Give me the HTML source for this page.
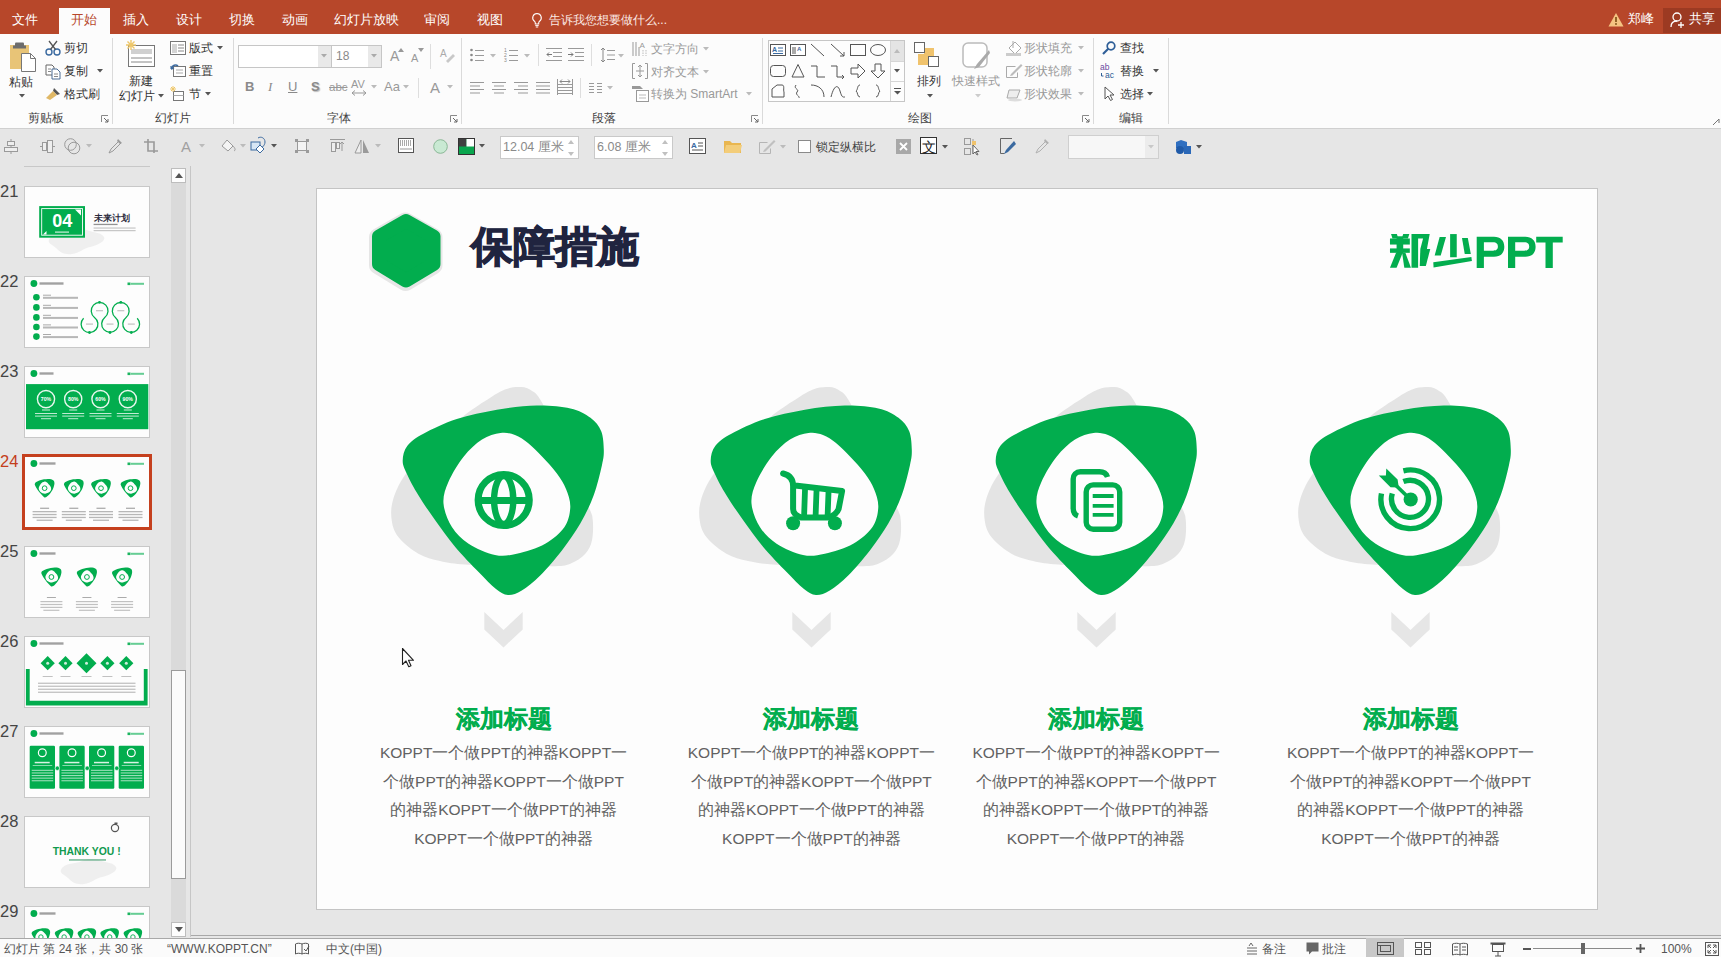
<!DOCTYPE html>
<html><head><meta charset="utf-8"><title>PowerPoint</title>
<style>
*{margin:0;padding:0;box-sizing:border-box}
html,body{width:1721px;height:957px;overflow:hidden}
body{position:relative;background:#e6e6e6;font-family:"Liberation Sans",sans-serif}
.a{position:absolute;white-space:nowrap}
svg.a{overflow:visible}
</style></head><body>
<div class="a" style="left:0px;top:0px;width:1721px;height:34px;background:#b7472a;"></div>
<div class="a" style="left:59px;top:8px;width:51px;height:27px;background:#fcfcfc;"></div>
<div class="a" style="left:-275px;width:600px;text-align:center;top:11.5px;font-size:12.5px;line-height:17px;color:#fff;font-weight:normal;">文件</div>
<div class="a" style="left:-216px;width:600px;text-align:center;top:11.5px;font-size:12.5px;line-height:17px;color:#b7472a;font-weight:normal;">开始</div>
<div class="a" style="left:-164px;width:600px;text-align:center;top:11.5px;font-size:12.5px;line-height:17px;color:#fff;font-weight:normal;">插入</div>
<div class="a" style="left:-111px;width:600px;text-align:center;top:11.5px;font-size:12.5px;line-height:17px;color:#fff;font-weight:normal;">设计</div>
<div class="a" style="left:-58px;width:600px;text-align:center;top:11.5px;font-size:12.5px;line-height:17px;color:#fff;font-weight:normal;">切换</div>
<div class="a" style="left:-5px;width:600px;text-align:center;top:11.5px;font-size:12.5px;line-height:17px;color:#fff;font-weight:normal;">动画</div>
<div class="a" style="left:66px;width:600px;text-align:center;top:11.5px;font-size:12.5px;line-height:17px;color:#fff;font-weight:normal;">幻灯片放映</div>
<div class="a" style="left:137px;width:600px;text-align:center;top:11.5px;font-size:12.5px;line-height:17px;color:#fff;font-weight:normal;">审阅</div>
<div class="a" style="left:190px;width:600px;text-align:center;top:11.5px;font-size:12.5px;line-height:17px;color:#fff;font-weight:normal;">视图</div>
<svg class="a" style="left:531px;top:12px;" width="12" height="16" viewBox="0 0 12 16"><path d="M6 1.5a4.3 4.3 0 0 0-2.6 7.7c.6.5.9 1.1.9 1.8v1h3.4v-1c0-.7.3-1.3.9-1.8A4.3 4.3 0 0 0 6 1.5z" fill="none" stroke="#fff" stroke-width="1.1"/><path d="M4.3 13.6h3.4M4.8 15h2.4" stroke="#fff" stroke-width="1"/></svg>
<div class="a" style="left:549px;top:12.0px;font-size:12px;line-height:16px;color:#fbe9e4;font-weight:normal;">告诉我您想要做什么...</div>
<svg class="a" style="left:1608px;top:12px;" width="16" height="15" viewBox="0 0 16 15"><path d="M8 1L15.5 14.5H.5z" fill="#f5c482"/><path d="M8 5v5" stroke="#7a4b10" stroke-width="1.6"/><circle cx="8" cy="12" r=".9" fill="#7a4b10"/></svg>
<div class="a" style="left:1628px;top:10.5px;font-size:12.5px;line-height:17px;color:#fff;font-weight:normal;">郑峰</div>
<div class="a" style="left:1663px;top:8px;width:58px;height:25px;background:#9c3a22;"></div>
<svg class="a" style="left:1670px;top:11px;" width="16" height="18" viewBox="0 0 16 18"><circle cx="7" cy="6" r="4" fill="none" stroke="#fff" stroke-width="1.3"/><path d="M1 16c0-4 2.5-6 6-6" fill="none" stroke="#fff" stroke-width="1.3"/><path d="M11 11v6M8 14h6" stroke="#fff" stroke-width="1.3"/></svg>
<div class="a" style="left:1689px;top:10.5px;font-size:12.5px;line-height:17px;color:#fff;font-weight:normal;">共享</div>
<div class="a" style="left:0px;top:34px;width:1721px;height:94px;background:#fcfcfc;"></div>
<div class="a" style="left:0px;top:128px;width:1721px;height:1px;background:#d0d0d0;"></div>
<div class="a" style="left:112px;top:38px;width:1px;height:86px;background:#dadada;"></div>
<div class="a" style="left:233px;top:38px;width:1px;height:86px;background:#dadada;"></div>
<div class="a" style="left:461px;top:38px;width:1px;height:86px;background:#dadada;"></div>
<div class="a" style="left:762px;top:38px;width:1px;height:86px;background:#dadada;"></div>
<div class="a" style="left:1093px;top:38px;width:1px;height:86px;background:#dadada;"></div>
<div class="a" style="left:1168px;top:38px;width:1px;height:86px;background:#dadada;"></div>
<div class="a" style="left:-254px;width:600px;text-align:center;top:110.0px;font-size:12px;line-height:16px;color:#444;font-weight:normal;">剪贴板</div>
<div class="a" style="left:-127px;width:600px;text-align:center;top:110.0px;font-size:12px;line-height:16px;color:#444;font-weight:normal;">幻灯片</div>
<div class="a" style="left:39px;width:600px;text-align:center;top:110.0px;font-size:12px;line-height:16px;color:#444;font-weight:normal;">字体</div>
<div class="a" style="left:304px;width:600px;text-align:center;top:110.0px;font-size:12px;line-height:16px;color:#444;font-weight:normal;">段落</div>
<div class="a" style="left:620px;width:600px;text-align:center;top:110.0px;font-size:12px;line-height:16px;color:#444;font-weight:normal;">绘图</div>
<div class="a" style="left:831px;width:600px;text-align:center;top:110.0px;font-size:12px;line-height:16px;color:#444;font-weight:normal;">编辑</div>
<svg class="a" style="left:101px;top:115px;" width="8" height="8" viewBox="0 0 8 8"><path d="M.5 7V.5H7" fill="none" stroke="#8a8a8a" stroke-width="1"/><path d="M3 3l4 4M4 7h3V4" fill="none" stroke="#666" stroke-width="1"/></svg>
<svg class="a" style="left:450px;top:115px;" width="8" height="8" viewBox="0 0 8 8"><path d="M.5 7V.5H7" fill="none" stroke="#8a8a8a" stroke-width="1"/><path d="M3 3l4 4M4 7h3V4" fill="none" stroke="#666" stroke-width="1"/></svg>
<svg class="a" style="left:751px;top:115px;" width="8" height="8" viewBox="0 0 8 8"><path d="M.5 7V.5H7" fill="none" stroke="#8a8a8a" stroke-width="1"/><path d="M3 3l4 4M4 7h3V4" fill="none" stroke="#666" stroke-width="1"/></svg>
<svg class="a" style="left:1082px;top:115px;" width="8" height="8" viewBox="0 0 8 8"><path d="M.5 7V.5H7" fill="none" stroke="#8a8a8a" stroke-width="1"/><path d="M3 3l4 4M4 7h3V4" fill="none" stroke="#666" stroke-width="1"/></svg>
<svg class="a" style="left:9px;top:41px;" width="29" height="31" viewBox="0 0 29 31"><rect x="1" y="4" width="19" height="24" fill="#e8c477"/><rect x="6" y="1.5" width="9" height="5" rx="1" fill="#6d6d6d"/><rect x="4" y="4.5" width="13" height="3" fill="#6d6d6d"/><path d="M12.5 12.5h9l5 5v13h-14z" fill="#fff" stroke="#777" stroke-width="1"/><path d="M21.5 12.5v5h5" fill="none" stroke="#777"/></svg>
<div class="a" style="left:-279px;width:600px;text-align:center;top:74.0px;font-size:12px;line-height:16px;color:#333;font-weight:normal;">粘贴</div>
<svg class="a" style="left:19px;top:94px;" width="6" height="4" viewBox="0 0 6 4"><path d="M0 0h6L3 3.5z" fill="#555"/></svg>
<svg class="a" style="left:45px;top:40px;" width="16" height="16" viewBox="0 0 16 16"><circle cx="4" cy="12" r="3" fill="none" stroke="#3b6aa0" stroke-width="1.4"/><circle cx="12" cy="12" r="3" fill="none" stroke="#3b6aa0" stroke-width="1.4"/><path d="M5.5 9.5L12 1M10.5 9.5L4 1" stroke="#555" stroke-width="1.3"/></svg>
<div class="a" style="left:64px;top:40.0px;font-size:12px;line-height:16px;color:#333;font-weight:normal;">剪切</div>
<svg class="a" style="left:45px;top:64px;" width="16" height="15" viewBox="0 0 16 15"><path d="M1 1h6l2 2v8H1z" fill="#fff" stroke="#666"/><path d="M7 5h5l3 3v7H7z" fill="#fff" stroke="#4d6d94"/><path d="M9 10h4M9 12.5h4M3 5h3M3 7.5h3" stroke="#888"/></svg>
<div class="a" style="left:64px;top:63.0px;font-size:12px;line-height:16px;color:#333;font-weight:normal;">复制</div>
<svg class="a" style="left:97px;top:69px;" width="6" height="4" viewBox="0 0 6 4"><path d="M0 0h6L3 3.5z" fill="#555"/></svg>
<svg class="a" style="left:45px;top:87px;" width="16" height="14" viewBox="0 0 16 14"><path d="M9 1l6 6-3 1-4-4z" fill="#555"/><path d="M1 11l7-7 4 4-7 5z" fill="#e0b866"/></svg>
<div class="a" style="left:64px;top:86.0px;font-size:12px;line-height:16px;color:#333;font-weight:normal;">格式刷</div>
<svg class="a" style="left:125px;top:40px;" width="32" height="29" viewBox="0 0 32 29"><rect x="3.5" y="5.5" width="26" height="21" fill="#fff" stroke="#777"/><rect x="6" y="9" width="21" height="5" fill="#d0d0d0"/><path d="M6 18h21M6 22h21" stroke="#888"/><g stroke="#eec76a" stroke-width="1.4"><path d="M6 0v10M1 5h10M2.5 1.5l7 7M9.5 1.5l-7 7"/></g></svg>
<div class="a" style="left:-159px;width:600px;text-align:center;top:73.0px;font-size:12px;line-height:16px;color:#333;font-weight:normal;">新建</div>
<div class="a" style="left:-163px;width:600px;text-align:center;top:88.0px;font-size:12px;line-height:16px;color:#333;font-weight:normal;">幻灯片</div>
<svg class="a" style="left:158px;top:94px;" width="6" height="4" viewBox="0 0 6 4"><path d="M0 0h6L3 3.5z" fill="#555"/></svg>
<svg class="a" style="left:170px;top:41px;" width="17" height="15" viewBox="0 0 17 15"><rect x=".5" y=".5" width="15" height="13" fill="#fff" stroke="#777"/><rect x="2" y="3" width="5" height="9" fill="#d4d4d4"/><path d="M8 4h6M8 7h6M8 10h6" stroke="#888"/></svg>
<div class="a" style="left:189px;top:40.0px;font-size:12px;line-height:16px;color:#333;font-weight:normal;">版式</div>
<svg class="a" style="left:217px;top:46px;" width="6" height="4" viewBox="0 0 6 4"><path d="M0 0h6L3 3.5z" fill="#555"/></svg>
<svg class="a" style="left:170px;top:63px;" width="17" height="15" viewBox="0 0 17 15"><rect x="3.5" y="3.5" width="12" height="10" fill="#fff" stroke="#777"/><path d="M6 7h7M6 10h7" stroke="#aaa"/><path d="M1 6c1-4 5-5 7-3" fill="none" stroke="#3b6aa0" stroke-width="1.5"/><path d="M0 3l1.5 4 3-2z" fill="#3b6aa0"/></svg>
<div class="a" style="left:189px;top:63.0px;font-size:12px;line-height:16px;color:#333;font-weight:normal;">重置</div>
<svg class="a" style="left:170px;top:86px;" width="15" height="15" viewBox="0 0 15 15"><rect x="3.5" y="5.5" width="10" height="9" fill="#fff" stroke="#777"/><path d="M3.5 9.5h10" stroke="#aaa"/><path d="M3 0v6M0 3h6M1 1l4 4M5 1L1 5" stroke="#eec76a"/></svg>
<div class="a" style="left:189px;top:86.0px;font-size:12px;line-height:16px;color:#333;font-weight:normal;">节</div>
<svg class="a" style="left:205px;top:92px;" width="6" height="4" viewBox="0 0 6 4"><path d="M0 0h6L3 3.5z" fill="#555"/></svg>
<div class="a" style="left:238px;top:45px;width:144px;height:23px;background:#fff;border:1px solid #c6c6c6"></div>
<div class="a" style="left:318px;top:46px;width:13px;height:21px;background:#e9e9e9;"></div>
<div class="a" style="left:331px;top:46px;width:1px;height:21px;background:#c6c6c6;"></div>
<div class="a" style="left:368px;top:46px;width:13px;height:21px;background:#e9e9e9;"></div>
<svg class="a" style="left:321px;top:54px;" width="6" height="4" viewBox="0 0 6 4"><path d="M0 0h6L3 3.5z" fill="#aaa"/></svg>
<svg class="a" style="left:371px;top:54px;" width="6" height="4" viewBox="0 0 6 4"><path d="M0 0h6L3 3.5z" fill="#aaa"/></svg>
<div class="a" style="left:336px;top:48.0px;font-size:12px;line-height:16px;color:#8a8a8a;font-weight:normal;">18</div>
<div class="a" style="left:395px;top:46.5px;font-size:14px;line-height:19px;color:#999;font-weight:normal;transform:translateX(-5px)">A</div>
<svg class="a" style="left:398px;top:48px;" width="6" height="4" viewBox="0 0 6 4"><path d="M0 4h6L3 0z" fill="#999"/></svg>
<div class="a" style="left:415px;top:50.5px;font-size:11px;line-height:15px;color:#999;font-weight:normal;transform:translateX(-4px)">A</div>
<svg class="a" style="left:418px;top:48px;" width="6" height="4" viewBox="0 0 6 4"><path d="M0 0h6L3 4z" fill="#999"/></svg>
<div class="a" style="left:430px;top:44px;width:1px;height:25px;background:#dedede;"></div>
<svg class="a" style="left:440px;top:48px;" width="15" height="15" viewBox="0 0 15 15"><text x="0" y="9" font-size="10" fill="#aaa" font-family="Liberation Sans">A</text><path d="M6 13l7-7 2 2-7 7z" fill="#c8c8c8"/></svg>
<div class="a" style="left:245px;top:78.0px;font-size:13px;line-height:18px;color:#8a8a8a;font-weight:normal;font-weight:bold">B</div>
<div class="a" style="left:268px;top:78.0px;font-size:13px;line-height:18px;color:#8a8a8a;font-weight:normal;font-style:italic;font-family:Liberation Serif">I</div>
<div class="a" style="left:288px;top:78.0px;font-size:13px;line-height:18px;color:#8a8a8a;font-weight:normal;text-decoration:underline">U</div>
<div class="a" style="left:311px;top:78.0px;font-size:13px;line-height:18px;color:#8a8a8a;font-weight:normal;font-weight:bold;text-shadow:1px 1px 1px #bbb">S</div>
<div class="a" style="left:329px;top:79.0px;font-size:11.5px;line-height:16px;color:#999;font-weight:normal;"><s>abc</s></div>
<div class="a" style="left:351px;top:76.5px;font-size:11px;line-height:15px;color:#999;font-weight:normal;">AV</div>
<svg class="a" style="left:351px;top:90px;" width="16" height="6" viewBox="0 0 16 6"><path d="M1 3h14M1 3l3-2.5M1 3l3 2.5M15 3l-3-2.5M15 3l-3 2.5" stroke="#999" fill="none"/></svg>
<svg class="a" style="left:371px;top:85px;" width="6" height="4" viewBox="0 0 6 4"><path d="M0 0h6L3 3.5z" fill="#bbb"/></svg>
<div class="a" style="left:384px;top:78.0px;font-size:13px;line-height:18px;color:#999;font-weight:normal;">Aa</div>
<svg class="a" style="left:403px;top:85px;" width="6" height="4" viewBox="0 0 6 4"><path d="M0 0h6L3 3.5z" fill="#bbb"/></svg>
<div class="a" style="left:418px;top:78px;width:1px;height:20px;background:#dedede;"></div>
<div class="a" style="left:430px;top:76.5px;font-size:15px;line-height:21px;color:#999;font-weight:normal;">A</div>
<svg class="a" style="left:447px;top:85px;" width="6" height="4" viewBox="0 0 6 4"><path d="M0 0h6L3 3.5z" fill="#bbb"/></svg>
<svg class="a" style="left:470px;top:48px;" width="15" height="14" viewBox="0 0 15 14"><g fill="#888"><circle cx="1.5" cy="2" r="1.3"/><circle cx="1.5" cy="7" r="1.3"/><circle cx="1.5" cy="12" r="1.3"/></g><path d="M5 2.5h9" stroke="#9a9a9a"/><path d="M5 7.5h9" stroke="#9a9a9a"/><path d="M5 12.5h9" stroke="#9a9a9a"/></svg>
<svg class="a" style="left:490px;top:54px;" width="6" height="4" viewBox="0 0 6 4"><path d="M0 0h6L3 3.5z" fill="#bbb"/></svg>
<svg class="a" style="left:504px;top:47px;" width="15" height="15" viewBox="0 0 15 15"><text x="0" y="5" font-size="5" fill="#888">1</text><text x="0" y="10" font-size="5" fill="#888">2</text><text x="0" y="15" font-size="5" fill="#888">3</text><path d="M5 3.5h9" stroke="#9a9a9a"/><path d="M5 8.5h9" stroke="#9a9a9a"/><path d="M5 13.5h9" stroke="#9a9a9a"/></svg>
<svg class="a" style="left:524px;top:54px;" width="6" height="4" viewBox="0 0 6 4"><path d="M0 0h6L3 3.5z" fill="#bbb"/></svg>
<div class="a" style="left:538px;top:44px;width:1px;height:22px;background:#dedede;"></div>
<svg class="a" style="left:546px;top:47px;" width="17" height="15" viewBox="0 0 17 15"><path d="M0 1.5h16" stroke="#9a9a9a"/><path d="M7 5.5h9" stroke="#9a9a9a"/><path d="M7 9.5h9" stroke="#9a9a9a"/><path d="M0 13.5h16" stroke="#9a9a9a"/><path d="M6 7.5H1M3 5.5L1 7.5l2 2" stroke="#777" fill="none"/></svg>
<svg class="a" style="left:568px;top:47px;" width="17" height="15" viewBox="0 0 17 15"><path d="M0 1.5h16" stroke="#9a9a9a"/><path d="M7 5.5h9" stroke="#9a9a9a"/><path d="M7 9.5h9" stroke="#9a9a9a"/><path d="M0 13.5h16" stroke="#9a9a9a"/><path d="M0 7.5h5M3 5.5l2 2-2 2" stroke="#777" fill="none"/></svg>
<div class="a" style="left:591px;top:44px;width:1px;height:22px;background:#dedede;"></div>
<svg class="a" style="left:600px;top:47px;" width="15" height="16" viewBox="0 0 15 16"><path d="M3 1v14M1 3l2-2 2 2M1 13l2 2 2-2" stroke="#888" fill="none"/><path d="M7 3.5h8" stroke="#9a9a9a"/><path d="M7 8.0h8" stroke="#9a9a9a"/><path d="M7 12.5h8" stroke="#9a9a9a"/></svg>
<svg class="a" style="left:618px;top:54px;" width="6" height="4" viewBox="0 0 6 4"><path d="M0 0h6L3 3.5z" fill="#bbb"/></svg>
<svg class="a" style="left:470px;top:81px;" width="14" height="13" viewBox="0 0 14 13"><path d="M0 1.5h14" stroke="#999"/><path d="M0 5.0h10" stroke="#999"/><path d="M0 8.5h14" stroke="#999"/><path d="M0 12.0h10" stroke="#999"/></svg>
<svg class="a" style="left:492px;top:81px;" width="14" height="13" viewBox="0 0 14 13"><path d="M0 1.5h14" stroke="#999"/><path d="M2 5.0h10" stroke="#999"/><path d="M0 8.5h14" stroke="#999"/><path d="M2 12.0h10" stroke="#999"/></svg>
<svg class="a" style="left:514px;top:81px;" width="14" height="13" viewBox="0 0 14 13"><path d="M0 1.5h14" stroke="#999"/><path d="M4 5.0h10" stroke="#999"/><path d="M0 8.5h14" stroke="#999"/><path d="M4 12.0h10" stroke="#999"/></svg>
<svg class="a" style="left:536px;top:81px;" width="14" height="13" viewBox="0 0 14 13"><path d="M0 1.5h14" stroke="#999"/><path d="M0 5.0h14" stroke="#999"/><path d="M0 8.5h14" stroke="#999"/><path d="M0 12.0h14" stroke="#999"/></svg>
<svg class="a" style="left:557px;top:79px;" width="16" height="16" viewBox="0 0 16 16"><path d="M.5 0v16M15.5 0v16" stroke="#999"/><path d="M1 5.5h14" stroke="#9a9a9a"/><path d="M1 8.5h14" stroke="#9a9a9a"/><path d="M1 11.5h14" stroke="#9a9a9a"/><path d="M1 14.5h14" stroke="#9a9a9a"/><path d="M3 2.5h10M3 2.5l2-2M3 2.5l2 2M13 2.5l-2-2M13 2.5l-2 2" stroke="#888" fill="none"/></svg>
<div class="a" style="left:580px;top:78px;width:1px;height:20px;background:#dedede;"></div>
<svg class="a" style="left:589px;top:82px;" width="14" height="12" viewBox="0 0 14 12"><path d="M0 1.5h5" stroke="#9a9a9a"/><path d="M0 4.5h5" stroke="#9a9a9a"/><path d="M0 7.5h5" stroke="#9a9a9a"/><path d="M0 10.5h5" stroke="#9a9a9a"/><path d="M8 1.5h5" stroke="#9a9a9a"/><path d="M8 4.5h5" stroke="#9a9a9a"/><path d="M8 7.5h5" stroke="#9a9a9a"/><path d="M8 10.5h5" stroke="#9a9a9a"/></svg>
<svg class="a" style="left:607px;top:86px;" width="6" height="4" viewBox="0 0 6 4"><path d="M0 0h6L3 3.5z" fill="#bbb"/></svg>
<svg class="a" style="left:632px;top:40px;" width="16" height="17" viewBox="0 0 16 17"><path d="M1 2v14M4 2v14M7 7v9" stroke="#999"/><text x="7.5" y="8" font-size="8" fill="#999">A</text><path d="M11 10v6M14 10v6" stroke="#bbb" stroke-dasharray="1.5 1"/></svg>
<div class="a" style="left:651px;top:41.0px;font-size:12px;line-height:16px;color:#999;font-weight:normal;">文字方向</div>
<svg class="a" style="left:703px;top:47px;" width="6" height="4" viewBox="0 0 6 4"><path d="M0 0h6L3 3.5z" fill="#bbb"/></svg>
<svg class="a" style="left:632px;top:63px;" width="16" height="16" viewBox="0 0 16 16"><path d="M3 .5H.5v15H3M13 .5h2.5v15H13" stroke="#999" fill="none"/><path d="M8 2v12M6 4l2-2 2 2M6 12l2 2 2-2M4 8h8" stroke="#999" fill="none"/></svg>
<div class="a" style="left:651px;top:64.0px;font-size:12px;line-height:16px;color:#999;font-weight:normal;">对齐文本</div>
<svg class="a" style="left:703px;top:70px;" width="6" height="4" viewBox="0 0 6 4"><path d="M0 0h6L3 3.5z" fill="#bbb"/></svg>
<svg class="a" style="left:632px;top:85px;" width="17" height="17" viewBox="0 0 17 17"><path d="M0 1h8l3 3H0z" fill="#999"/><rect x="4.5" y="5.5" width="12" height="11" fill="#fff" stroke="#999"/><path d="M7 10h7M7 13h7" stroke="#bbb"/></svg>
<div class="a" style="left:651px;top:86.0px;font-size:12px;line-height:16px;color:#999;font-weight:normal;">转换为 SmartArt</div>
<svg class="a" style="left:746px;top:92px;" width="6" height="4" viewBox="0 0 6 4"><path d="M0 0h6L3 3.5z" fill="#bbb"/></svg>
<div class="a" style="left:768px;top:40px;width:137px;height:62px;background:#fdfdfd;border:1px solid #c6c6c6"></div>
<div class="a" style="left:890px;top:41px;width:1px;height:60px;background:#d6d6d6;"></div>
<div class="a" style="left:891px;top:41px;width:13px;height:20px;background:#e4e4e4;"></div>
<div class="a" style="left:891px;top:61px;width:13px;height:1px;background:#d6d6d6;"></div>
<div class="a" style="left:891px;top:81px;width:13px;height:1px;background:#d6d6d6;"></div>
<svg class="a" style="left:894px;top:49px;" width="6" height="4" viewBox="0 0 6 4"><path d="M0 4h6L3 0z" fill="#bbb"/></svg>
<svg class="a" style="left:894px;top:69px;" width="6" height="4" viewBox="0 0 6 4"><path d="M0 0h6L3 3.5z" fill="#555"/></svg>
<svg class="a" style="left:894px;top:88px;" width="7" height="7" viewBox="0 0 7 7"><path d="M0 .5h7" stroke="#555"/><path d="M0 3h7L3.5 6.5z" fill="#555"/></svg>
<svg class="a" style="left:770px;top:42px;" width="16" height="16" viewBox="-8 -8 16 16"><rect x="-7.5" y="-5.5" width="15" height="11" fill="#fff" stroke="#555"/><text x="-6" y="2" font-size="7" fill="#3b6aa0" font-weight="bold">A</text><path d="M0 -2h5M0 1h5M-5 3.5h10" stroke="#3b6aa0"/></svg>
<svg class="a" style="left:790px;top:42px;" width="16" height="16" viewBox="-8 -8 16 16"><rect x="-7.5" y="-5.5" width="15" height="11" fill="#fff" stroke="#555"/><path d="M-5 -3v7M-3 -3v7" stroke="#555"/><text x="-1" y="1" font-size="6" fill="#3b6aa0" font-weight="bold">A</text></svg>
<svg class="a" style="left:810px;top:42px;" width="16" height="16" viewBox="-8 -8 16 16"><path d="M-7 -6L6 6" stroke="#555" fill="none" stroke-width="1"/></svg>
<svg class="a" style="left:830px;top:42px;" width="16" height="16" viewBox="-8 -8 16 16"><path d="M-7 -6L6 6M6 6V2M6 6H2" stroke="#555" fill="none" stroke-width="1"/></svg>
<svg class="a" style="left:850px;top:42px;" width="16" height="16" viewBox="-8 -8 16 16"><rect x="-7.5" y="-5.5" width="15" height="11" stroke="#555" fill="none" stroke-width="1"/></svg>
<svg class="a" style="left:870px;top:42px;" width="16" height="16" viewBox="-8 -8 16 16"><ellipse cx="0" cy="0" rx="7.5" ry="5.5" stroke="#555" fill="none" stroke-width="1"/></svg>
<svg class="a" style="left:770px;top:63px;" width="16" height="16" viewBox="-8 -8 16 16"><rect x="-7.5" y="-5.5" width="15" height="11" rx="3" stroke="#555" fill="none" stroke-width="1"/></svg>
<svg class="a" style="left:790px;top:63px;" width="16" height="16" viewBox="-8 -8 16 16"><path d="M0 -6.5L6 6H-6z" stroke="#555" fill="none" stroke-width="1"/></svg>
<svg class="a" style="left:810px;top:63px;" width="16" height="16" viewBox="-8 -8 16 16"><path d="M-7 -5H-1V6H7" stroke="#555" fill="none" stroke-width="1"/></svg>
<svg class="a" style="left:830px;top:63px;" width="16" height="16" viewBox="-8 -8 16 16"><path d="M-7 -5H-1V6H6M4 4l2 2-2 2" stroke="#555" fill="none" stroke-width="1"/></svg>
<svg class="a" style="left:850px;top:63px;" width="16" height="16" viewBox="-8 -8 16 16"><path d="M-7 -3H0V-7L7 0 0 7V3H-7z" stroke="#555" fill="none" stroke-width="1"/></svg>
<svg class="a" style="left:870px;top:63px;" width="16" height="16" viewBox="-8 -8 16 16"><path d="M-3 -7H3V0H7L0 7-7 0H-3z" stroke="#555" fill="none" stroke-width="1"/></svg>
<svg class="a" style="left:770px;top:83px;" width="16" height="16" viewBox="-8 -8 16 16"><path d="M-6 6V-2L-1 -6H4C7 -6 5 -1 6 1V6z" stroke="#555" fill="none" stroke-width="1"/></svg>
<svg class="a" style="left:790px;top:83px;" width="16" height="16" viewBox="-8 -8 16 16"><path d="M-2 -6C-5 -2 2 -2 -1 1-3 4 2 5 1 7" stroke="#555" fill="none" stroke-width="1"/></svg>
<svg class="a" style="left:810px;top:83px;" width="16" height="16" viewBox="-8 -8 16 16"><path d="M-7 -6C0 -6 6 -2 6 6" stroke="#555" fill="none" stroke-width="1"/></svg>
<svg class="a" style="left:830px;top:83px;" width="16" height="16" viewBox="-8 -8 16 16"><path d="M-7 6C-4 -6 0 -7 2 0S5 6 7 6" stroke="#555" fill="none" stroke-width="1"/></svg>
<svg class="a" style="left:850px;top:83px;" width="16" height="16" viewBox="-8 -8 16 16"><path d="M2 -6C-1 -6 0 -1-2 0 0 1-1 6 2 6" stroke="#555" fill="none" stroke-width="1"/></svg>
<svg class="a" style="left:870px;top:83px;" width="16" height="16" viewBox="-8 -8 16 16"><path d="M-2 -6C1 -6 0 -1 2 0 0 1 1 6-2 6" stroke="#555" fill="none" stroke-width="1"/></svg>
<svg class="a" style="left:914px;top:42px;" width="29" height="27" viewBox="0 0 29 27"><rect x="10" y="6" width="10" height="11" fill="#f0c36d"/><rect x="4" y="12" width="10" height="11" fill="#f0c36d"/><rect x=".5" y=".5" width="10" height="10" fill="#fff" stroke="#666"/><rect x="14.5" y="14.5" width="10" height="10" fill="#fff" stroke="#666"/></svg>
<div class="a" style="left:629px;width:600px;text-align:center;top:73.0px;font-size:12px;line-height:16px;color:#333;font-weight:normal;">排列</div>
<svg class="a" style="left:927px;top:94px;" width="6" height="4" viewBox="0 0 6 4"><path d="M0 0h6L3 3.5z" fill="#555"/></svg>
<svg class="a" style="left:962px;top:42px;" width="28" height="29" viewBox="0 0 28 29"><rect x="1" y="1" width="24" height="24" rx="5" fill="#fff" stroke="#bbb" stroke-width="1.5"/><path d="M27 8L15 22l-3 5 5-2 11-14z" fill="#aaa"/></svg>
<div class="a" style="left:676px;width:600px;text-align:center;top:73.0px;font-size:12px;line-height:16px;color:#999;font-weight:normal;">快速样式</div>
<svg class="a" style="left:975px;top:94px;" width="6" height="4" viewBox="0 0 6 4"><path d="M0 0h6L3 3.5z" fill="#ccc"/></svg>
<svg class="a" style="left:1006px;top:40px;" width="17" height="17" viewBox="0 0 17 17"><path d="M3 8l6-6 6 6-6 6z" fill="#fff" stroke="#aaa"/><path d="M7 1v7" stroke="#aaa"/><rect x="0" y="13" width="15" height="3" fill="#ccc"/></svg>
<div class="a" style="left:1024px;top:40.0px;font-size:12px;line-height:16px;color:#999;font-weight:normal;">形状填充</div>
<svg class="a" style="left:1078px;top:46px;" width="6" height="4" viewBox="0 0 6 4"><path d="M0 0h6L3 3.5z" fill="#bbb"/></svg>
<svg class="a" style="left:1006px;top:63px;" width="17" height="16" viewBox="0 0 17 16"><path d="M.5 3.5h9M.5 3.5v11h11v-5" stroke="#aaa" fill="none"/><path d="M5 11l10-10 1.5 1.5L6.5 12.5 4 13z" fill="#bbb"/></svg>
<div class="a" style="left:1024px;top:63.0px;font-size:12px;line-height:16px;color:#999;font-weight:normal;">形状轮廓</div>
<svg class="a" style="left:1078px;top:69px;" width="6" height="4" viewBox="0 0 6 4"><path d="M0 0h6L3 3.5z" fill="#bbb"/></svg>
<svg class="a" style="left:1006px;top:86px;" width="17" height="16" viewBox="0 0 17 16"><path d="M3 4h11l-3 8H1z" fill="#eee" stroke="#aaa"/><ellipse cx="9" cy="14" rx="7" ry="1.5" fill="#ddd"/></svg>
<div class="a" style="left:1024px;top:86.0px;font-size:12px;line-height:16px;color:#999;font-weight:normal;">形状效果</div>
<svg class="a" style="left:1078px;top:92px;" width="6" height="4" viewBox="0 0 6 4"><path d="M0 0h6L3 3.5z" fill="#bbb"/></svg>
<svg class="a" style="left:1102px;top:41px;" width="14" height="14" viewBox="0 0 14 14"><circle cx="9" cy="5" r="3.8" fill="none" stroke="#2f5f98" stroke-width="1.7"/><path d="M6.5 7.5L1 13" stroke="#2f5f98" stroke-width="2.2"/></svg>
<div class="a" style="left:1120px;top:40.0px;font-size:12px;line-height:16px;color:#333;font-weight:normal;">查找</div>
<svg class="a" style="left:1100px;top:63px;" width="18" height="16" viewBox="0 0 18 16"><text x="0" y="7" font-size="8.5" fill="#6b4aa0" font-family="Liberation Sans">ab</text><text x="5" y="15" font-size="8.5" fill="#2f5f98" font-family="Liberation Sans">ac</text><path d="M1.5 10v3h2" stroke="#2f5f98" fill="none"/></svg>
<div class="a" style="left:1120px;top:63.0px;font-size:12px;line-height:16px;color:#333;font-weight:normal;">替换</div>
<svg class="a" style="left:1153px;top:69px;" width="6" height="4" viewBox="0 0 6 4"><path d="M0 0h6L3 3.5z" fill="#555"/></svg>
<svg class="a" style="left:1104px;top:86px;" width="12" height="15" viewBox="0 0 12 15"><path d="M1 1v12l3-3 2.5 4.5 2-1L6 9h4z" fill="#fff" stroke="#555"/></svg>
<div class="a" style="left:1120px;top:86.0px;font-size:12px;line-height:16px;color:#333;font-weight:normal;">选择</div>
<svg class="a" style="left:1147px;top:92px;" width="6" height="4" viewBox="0 0 6 4"><path d="M0 0h6L3 3.5z" fill="#555"/></svg>
<svg class="a" style="left:1712px;top:118px;" width="8" height="8" viewBox="0 0 8 8"><path d="M1 7L7 1M7 1v4" stroke="#777" fill="none"/></svg>
<div class="a" style="left:0px;top:129px;width:1721px;height:38px;background:#e6e6e6;"></div>
<svg class="a" style="left:4px;top:139px;" width="14" height="15" viewBox="0 0 14 15"><path d="M7 0v15" stroke="#9a9a9a"/><rect x="3.5" y="2.5" width="7" height="4" fill="#eee" stroke="#9a9a9a"/><rect x=".5" y="8.5" width="13" height="4" fill="#eee" stroke="#9a9a9a"/></svg>
<svg class="a" style="left:40px;top:140px;" width="15" height="13" viewBox="0 0 15 13"><path d="M0 6.5h15" stroke="#9a9a9a"/><rect x="2.5" y="2.5" width="4" height="8" fill="#eee" stroke="#9a9a9a"/><rect x="7.5" y=".5" width="5" height="12" fill="#eee" stroke="#9a9a9a"/></svg>
<svg class="a" style="left:64px;top:138px;" width="17" height="17" viewBox="0 0 17 17"><circle cx="6.5" cy="6.5" r="5.8" fill="none" stroke="#9a9a9a"/><circle cx="10" cy="10" r="5.8" fill="none" stroke="#9a9a9a"/></svg>
<svg class="a" style="left:86px;top:144px;" width="6" height="4" viewBox="0 0 6 4"><path d="M0 0h6L3 3.5z" fill="#bbb"/></svg>
<svg class="a" style="left:108px;top:138px;" width="15" height="16" viewBox="0 0 15 16"><path d="M1 15l2-4 8-8 2 2-8 8z" fill="none" stroke="#9a9a9a"/><path d="M10 1l4 4-2 1-3-3z" fill="#9a9a9a"/></svg>
<svg class="a" style="left:144px;top:139px;" width="14" height="14" viewBox="0 0 14 14"><path d="M4 0v12h10M0 3h10v11" stroke="#9a9a9a" fill="none" stroke-width="1.6"/></svg>
<div class="a" style="left:181px;top:135.5px;font-size:15px;line-height:21px;color:#a0a0a0;font-weight:normal;">A</div>
<svg class="a" style="left:199px;top:144px;" width="6" height="4" viewBox="0 0 6 4"><path d="M0 0h6L3 3.5z" fill="#bbb"/></svg>
<svg class="a" style="left:220px;top:138px;" width="17" height="16" viewBox="0 0 17 16"><path d="M2 8l5-6 6 6-5 5z" fill="#f4f4f4" stroke="#9a9a9a"/><path d="M13 8c2 2 3 4 1 5" stroke="#9a9a9a" fill="none"/></svg>
<svg class="a" style="left:240px;top:144px;" width="6" height="4" viewBox="0 0 6 4"><path d="M0 0h6L3 3.5z" fill="#bbb"/></svg>
<svg class="a" style="left:250px;top:137px;" width="17" height="17" viewBox="0 0 17 17"><path d="M8 1c3-2 7 0 7 4s-4 6-7 9" fill="none" stroke="#3b6aa0"/><rect x="1" y="5" width="9" height="8" fill="#d6e6f5" stroke="#3b6aa0"/><path d="M10 8l4 4-4 4-4-4z" fill="#fff" stroke="#3b6aa0"/></svg>
<svg class="a" style="left:271px;top:144px;" width="6" height="4" viewBox="0 0 6 4"><path d="M0 0h6L3 3.5z" fill="#555"/></svg>
<svg class="a" style="left:294px;top:138px;" width="16" height="16" viewBox="0 0 16 16"><rect x="3.5" y="3.5" width="9" height="9" fill="#f4f4f4" stroke="#9a9a9a"/><g fill="#9a9a9a"><rect x="1" y="1" width="3" height="3"/><rect x="12" y="1" width="3" height="3"/><rect x="1" y="12" width="3" height="3"/><rect x="12" y="12" width="3" height="3"/></g></svg>
<svg class="a" style="left:330px;top:139px;" width="15" height="14" viewBox="0 0 15 14"><path d="M0 .5h15" stroke="#9a9a9a"/><rect x="1.5" y="3.5" width="4" height="9" fill="#eee" stroke="#9a9a9a"/><rect x="6.5" y="3.5" width="3" height="6" fill="#eee" stroke="#9a9a9a"/><path d="M12 12V3M10 5l2-2 2 2" stroke="#9a9a9a" fill="none"/></svg>
<svg class="a" style="left:354px;top:139px;" width="16" height="15" viewBox="0 0 16 15"><path d="M7 1v13H1z" fill="#eee" stroke="#9a9a9a"/><path d="M9 1l6 13H9z" fill="#9a9a9a"/></svg>
<svg class="a" style="left:375px;top:144px;" width="6" height="4" viewBox="0 0 6 4"><path d="M0 0h6L3 3.5z" fill="#bbb"/></svg>
<svg class="a" style="left:398px;top:138px;" width="16" height="15" viewBox="0 0 16 15"><rect x=".5" y=".5" width="15" height="14" fill="#fff" stroke="#555"/><path d="M2 3h12M2 5h12M2 7h12" stroke="#555" stroke-dasharray="1 1"/><path d="M2 11h12" stroke="#999"/></svg>
<svg class="a" style="left:433px;top:139px;" width="15" height="15" viewBox="0 0 15 15"><circle cx="7.5" cy="7.5" r="6.8" fill="#c9e9d3" stroke="#8ab896"/></svg>
<svg class="a" style="left:458px;top:138px;" width="17" height="17" viewBox="0 0 17 17"><rect x="0" y="0" width="17" height="17" fill="#0aa64e"/><rect x="0" y="0" width="8.5" height="8.5" fill="#404040"/><rect x="8.5" y="0" width="8.5" height="8.5" fill="#fff"/><rect x=".5" y=".5" width="16" height="16" fill="none" stroke="#333"/></svg>
<svg class="a" style="left:479px;top:144px;" width="6" height="4" viewBox="0 0 6 4"><path d="M0 0h6L3 3.5z" fill="#555"/></svg>
<div class="a" style="left:500px;top:136px;width:79px;height:23px;background:#fff;border:1px solid #c9c9c9"></div>
<div class="a" style="left:503px;top:138.5px;font-size:12.5px;line-height:17px;color:#8a8a8a;font-weight:normal;">12.04 厘米</div>
<svg class="a" style="left:568px;top:140px;" width="6" height="16" viewBox="0 0 6 16"><path d="M0 4h6L3 0zM0 12h6L3 16z" fill="#c0c0c0"/></svg>
<div class="a" style="left:594px;top:136px;width:79px;height:23px;background:#fff;border:1px solid #c9c9c9"></div>
<div class="a" style="left:597px;top:138.5px;font-size:12.5px;line-height:17px;color:#8a8a8a;font-weight:normal;">6.08 厘米</div>
<svg class="a" style="left:662px;top:140px;" width="6" height="16" viewBox="0 0 6 16"><path d="M0 4h6L3 0zM0 12h6L3 16z" fill="#c0c0c0"/></svg>
<svg class="a" style="left:689px;top:138px;" width="17" height="16" viewBox="0 0 17 16"><rect x=".5" y=".5" width="16" height="15" fill="#fff" stroke="#555"/><text x="2" y="10" font-size="8" fill="#3b6aa0" font-weight="bold">A</text><path d="M9 5h5M9 8h5M3 12h11" stroke="#555"/></svg>
<svg class="a" style="left:724px;top:139px;" width="18" height="14" viewBox="0 0 18 14"><path d="M0 2h6l2 2h9v10H0z" fill="#e9b650"/><path d="M2 6h16l-2 8H0z" fill="#f3cd7a"/></svg>
<svg class="a" style="left:759px;top:139px;" width="16" height="15" viewBox="0 0 16 15"><path d="M.5 3.5h8M.5 3.5v11h11v-5" stroke="#b5b5b5" fill="none"/><path d="M5 11l10-10 1.5 1.5L6.5 12.5 4 13z" fill="#c0c0c0"/></svg>
<svg class="a" style="left:780px;top:145px;" width="6" height="4" viewBox="0 0 6 4"><path d="M0 0h6L3 3.5z" fill="#bbb"/></svg>
<div class="a" style="left:798px;top:140px;width:13px;height:13px;background:#fff;border:1px solid #8a8a8a"></div>
<div class="a" style="left:816px;top:139.0px;font-size:12px;line-height:16px;color:#444;font-weight:normal;">锁定纵横比</div>
<svg class="a" style="left:896px;top:139px;" width="15" height="15" viewBox="0 0 15 15"><rect width="15" height="15" fill="#a8a8a8"/><path d="M4 4l7 7M11 4l-7 7" stroke="#fff" stroke-width="1.8"/></svg>
<svg class="a" style="left:920px;top:137px;" width="17" height="17" viewBox="0 0 17 17"><rect x=".5" y=".5" width="16" height="16" fill="#fff" stroke="#333"/><text x="1.5" y="14.5" font-size="14" fill="#222">文</text></svg>
<svg class="a" style="left:942px;top:145px;" width="6" height="4" viewBox="0 0 6 4"><path d="M0 0h6L3 3.5z" fill="#555"/></svg>
<svg class="a" style="left:964px;top:138px;" width="17" height="17" viewBox="0 0 17 17"><rect x=".5" y=".5" width="6" height="6" fill="none" stroke="#9a9a9a"/><rect x=".5" y="10.5" width="6" height="6" fill="none" stroke="#9a9a9a"/><path d="M9 1v15" stroke="#9a9a9a"/><path d="M9 7v9l2-2 2 3 1-.5-2-3h3z" fill="#fff" stroke="#666"/><rect x="8" y="3" width="4" height="4" fill="#f0c36d"/></svg>
<svg class="a" style="left:1000px;top:138px;" width="16" height="17" viewBox="0 0 16 17"><path d="M12 .5H.5v15h4" stroke="#666" fill="none"/><path d="M14 3L6 12l-2 4 4-2 8-8z" fill="#3b6aa0"/></svg>
<svg class="a" style="left:1035px;top:138px;" width="15" height="16" viewBox="0 0 15 16"><path d="M1 15l2-4 8-8 2 2-8 8z" fill="none" stroke="#b0b0b0"/><path d="M10 1l4 4-2 1-3-3z" fill="#b0b0b0"/></svg>
<div class="a" style="left:1068px;top:135px;width:91px;height:24px;background:#f7f7f7;border:1px solid #cfcfcf"></div>
<div class="a" style="left:1145px;top:136px;width:13px;height:22px;background:#ececec;"></div>
<svg class="a" style="left:1148px;top:145px;" width="6" height="4" viewBox="0 0 6 4"><path d="M0 0h6L3 3.5z" fill="#c8c8c8"/></svg>
<svg class="a" style="left:1176px;top:139px;" width="16" height="16" viewBox="0 0 16 16"><path d="M5 1l6 2v6l-6 2-5-2V3z" fill="#2f6fc0"/><circle cx="4" cy="11" r="4" fill="#1f5aa8"/><rect x="8" y="7" width="7" height="8" fill="#2a68b8"/></svg>
<svg class="a" style="left:1196px;top:145px;" width="6" height="4" viewBox="0 0 6 4"><path d="M0 0h6L3 3.5z" fill="#555"/></svg>
<div class="a" style="left:24px;top:166px;width:126px;height:1px;background:#c8c8c8;"></div>
<div class="a" style="left:171px;top:182px;width:15px;height:740px;background:#dadada;"></div>
<div class="a" style="left:171px;top:168px;width:15px;height:15px;background:#fdfdfd;border:1px solid #bdbdbd"></div>
<svg class="a" style="left:175px;top:173px;" width="8" height="5" viewBox="0 0 8 5"><path d="M0 5h8L4 0z" fill="#555"/></svg>
<div class="a" style="left:171px;top:670px;width:15px;height:209px;background:#fbfbfb;border:1px solid #9b9b9b"></div>
<div class="a" style="left:171px;top:922px;width:15px;height:15px;background:#fdfdfd;border:1px solid #bdbdbd"></div>
<svg class="a" style="left:175px;top:927px;" width="8" height="5" viewBox="0 0 8 5"><path d="M0 0h8L4 5z" fill="#555"/></svg>
<div class="a" style="left:190px;top:166px;width:1px;height:771px;background:#c6c6c6;"></div>
<div class="a" style="left:191px;top:935px;width:1530px;height:1px;background:#a8a8a8;"></div>
<div class="a" style="left:0px;top:938px;width:1721px;height:19px;background:#fbfbfb;"></div>
<div class="a" style="left:0px;top:938px;width:1721px;height:1px;background:#a8a8a8;"></div>
<div class="a" style="left:4px;top:940.5px;font-size:12px;line-height:16px;color:#555;font-weight:normal;">幻灯片 第 24 张，共 30 张</div>
<div class="a" style="left:167px;top:940.5px;font-size:12px;line-height:16px;color:#555;font-weight:normal;">“WWW.KOPPT.CN”</div>
<svg class="a" style="left:295px;top:942px;" width="15" height="14" viewBox="0 0 15 14"><path d="M7 2C5 1 2 1 .5 2v10c1.5-1 4.5-1 6.5 0 2-1 5-1 6.5 0V2C12 1 9 1 7 2zM7 2v10" fill="none" stroke="#555"/><path d="M9 7l2 2 3-5" stroke="#555" fill="none"/></svg>
<div class="a" style="left:326px;top:940.5px;font-size:12px;line-height:16px;color:#555;font-weight:normal;">中文(中国)</div>
<svg class="a" style="left:1245px;top:942px;" width="12" height="13" viewBox="0 0 12 13"><path d="M2 6h10M2 9h10M2 12h10M4 4l2-3 2 3" stroke="#666" fill="none"/></svg>
<div class="a" style="left:1262px;top:940.5px;font-size:12px;line-height:16px;color:#555;font-weight:normal;">备注</div>
<svg class="a" style="left:1306px;top:942px;" width="13" height="13" viewBox="0 0 13 13"><path d="M.5 .5h12v9H6l-3 3v-3H.5z" fill="#666"/></svg>
<div class="a" style="left:1322px;top:940.5px;font-size:12px;line-height:16px;color:#555;font-weight:normal;">批注</div>
<div class="a" style="left:1366px;top:938px;width:38px;height:19px;background:#c8c8c8;"></div>
<svg class="a" style="left:1377px;top:942px;" width="17" height="13" viewBox="0 0 17 13"><rect x=".5" y=".5" width="16" height="12" fill="none" stroke="#555"/><rect x="3.5" y="3.5" width="10" height="6" fill="none" stroke="#555"/><path d="M.5 3.5h3" stroke="#555"/></svg>
<svg class="a" style="left:1415px;top:942px;" width="16" height="13" viewBox="0 0 16 13"><g fill="none" stroke="#555"><rect x=".5" y=".5" width="6" height="5"/><rect x="9.5" y=".5" width="6" height="5"/><rect x=".5" y="7.5" width="6" height="5"/><rect x="9.5" y="7.5" width="6" height="5"/></g></svg>
<svg class="a" style="left:1452px;top:942px;" width="16" height="14" viewBox="0 0 16 14"><path d="M8 2C6 1 3 1 .5 2v11c2.5-1 5.5-1 7.5 0 2-1 5-1 7.5 0V2C13 1 10 1 8 2zM8 2v11" fill="none" stroke="#555"/><path d="M2 5h4M2 8h4M10 5h4M10 8h4" stroke="#555"/></svg>
<svg class="a" style="left:1490px;top:942px;" width="16" height="14" viewBox="0 0 16 14"><rect x=".5" y=".5" width="15" height="2" fill="#555"/><rect x="2.5" y="2.5" width="11" height="7" fill="none" stroke="#555"/><path d="M8 9.5V14M5 14h6" stroke="#555"/></svg>
<div class="a" style="left:1523px;top:948px;width:8px;height:2px;background:#555;"></div>
<div class="a" style="left:1533px;top:948px;width:99px;height:1px;background:#8a8a8a;"></div>
<div class="a" style="left:1581px;top:943px;width:4px;height:11px;background:#666;"></div>
<svg class="a" style="left:1636px;top:944px;" width="9" height="9" viewBox="0 0 9 9"><path d="M4.5 0v9M0 4.5h9" stroke="#555" stroke-width="1.8"/></svg>
<div class="a" style="left:1661px;top:940.5px;font-size:12px;line-height:16px;color:#555;font-weight:normal;">100%</div>
<svg class="a" style="left:1705px;top:942px;" width="14" height="14" viewBox="0 0 14 14"><rect x=".5" y=".5" width="13" height="13" fill="none" stroke="#555"/><path d="M3 3l3 3M3 3h3M3 3v3M11 11l-3-3M11 11H8M11 11V8M11 3L8 6M11 3H8M11 3v3M3 11l3-3M3 11h3M3 11V8" stroke="#555" fill="none"/></svg>
<div class="a" style="left:316px;top:188px;width:1282px;height:722px;background:#fdfdfd;border:1px solid #c4c4c4"></div>
<div class="a" style="left:0;top:0;width:1721px;height:957px"><svg class="a" style="left:360px;top:200px;" width="90" height="100" viewBox="360 200 90 100"><path d="M406 221 L433.5 236.5 V264 L406 280.5 L379 264 V236.5 Z" fill="#e6e6e6" stroke="#e6e6e6" stroke-width="19" stroke-linejoin="round" transform="translate(-.5 1)"/><path d="M406 221 L433.5 236.5 V264 L406 280.5 L379 264 V236.5 Z" fill="#02ad4e" stroke="#02ad4e" stroke-width="14" stroke-linejoin="round"/></svg>
<div class="a" style="left:471px;top:217.0px;font-size:41.5px;line-height:60px;color:#20243f;font-weight:bold;-webkit-text-stroke:1.2px #20243f">保障措施</div>
<svg class="a" style="left:1385px;top:228px;" width="95" height="46" viewBox="0 0 95 46"><g fill="#02ad4e" transform="scale(0.055188)"><path d="M110 110H215L240 190H135Z"/><path d="M330 110H440L415 190H305Z"/><path d="M90 190H450V300H90Z"/><path d="M90 370H450V450H90Z"/><path d="M210 150H330V460H210Z"/><path d="M200 450H320L210 720H90Z"/><path d="M310 450H370L470 720H350Z"/><path d="M480 110H810L760 380H640L690 190H600V720H480Z"/><path d="M640 380H820L740 690H630Z"/><path d="M990 165H1105L1010 500H900Z"/><path d="M1180 110H1300V530H1180Z"/><path d="M1395 180H1500L1555 470H1445Z"/><path d="M875 620L1565 525L1575 600L880 715Z"/></g></svg>
<svg class="a" style="left:1470px;top:228px;" width="100" height="46" viewBox="1470 228 100 46"><g fill="#02ad4e"><path fill-rule="evenodd" d="M1476.7 236.7H1494C1500.5 236.7 1504.3 240.5 1504.3 246.7C1504.3 253 1500.5 256.8 1494 256.8H1483.9V268.1H1476.7ZM1483.9 242.2V250.7H1493C1496.5 250.7 1497.9 249 1497.9 246.5C1497.9 244 1496.5 242.2 1493 242.2Z"/><path fill-rule="evenodd" transform="translate(31.3 0)" d="M1476.7 236.7H1494C1500.5 236.7 1504.3 240.5 1504.3 246.7C1504.3 253 1500.5 256.8 1494 256.8H1483.9V268.1H1476.7ZM1483.9 242.2V250.7H1493C1496.5 250.7 1497.9 249 1497.9 246.5C1497.9 244 1496.5 242.2 1493 242.2Z"/><path d="M1536.2 236.7H1562.7V242.5H1552.8V268.1H1545.5V242.5H1536.2Z"/></g></svg>
<svg class="a" style="left:380px;top:370px;" width="240" height="290" viewBox="380 370 240 290"><g transform="translate(0 0)"><path d="M518.3 387.0C522.5 387.0 526.3 387.0 530.3 389.7C534.3 392.4 536.3 392.2 542.3 403.1C548.2 414.0 558.3 437.7 566.0 455.0C573.7 472.3 584.2 496.0 588.7 506.9C593.2 517.8 592.2 514.7 592.8 520.3C593.3 525.9 593.2 534.7 592.0 540.3C590.8 545.9 588.9 549.8 585.3 553.7C581.7 557.6 575.9 561.6 570.3 563.7C564.7 565.8 562.8 565.9 551.9 566.3C541.0 566.7 519.5 566.3 505.0 566.0C490.5 565.7 475.8 565.4 465.0 564.6C454.2 563.8 447.8 562.8 440.0 561.0C432.2 559.2 425.3 557.7 418.4 553.7C411.5 549.7 402.8 542.6 398.4 537.0C393.9 531.4 392.6 526.5 391.7 520.3C390.8 514.1 390.8 507.6 393.0 500.0C395.2 492.4 398.5 484.3 405.0 475.0C411.5 465.7 422.0 454.0 432.0 444.0C442.0 434.0 455.1 422.8 464.8 415.1C474.5 407.4 483.5 402.0 490.2 397.7C496.9 393.4 500.3 391.3 505.0 389.5C509.7 387.7 514.1 387.0 518.3 387.0Z" fill="#e4e4e4"/><path d="M402.7 460.5C402.8 455.9 403.9 450.2 407.4 445.8C410.8 441.4 415.2 438.2 423.4 433.8C431.6 429.4 444.6 423.1 456.8 419.1C469.1 415.1 483.5 412.0 496.9 409.7C510.3 407.4 524.8 405.7 537.0 405.5C549.2 405.3 561.5 406.3 570.4 408.4C579.3 410.4 585.4 414.0 590.5 417.8C595.6 421.6 598.9 425.8 601.1 431.1C603.3 436.4 603.6 444.2 603.8 449.8C603.9 455.4 603.7 457.4 602.0 465.0C600.3 472.6 597.3 485.4 593.7 495.2C590.1 505.0 585.6 514.4 580.3 523.6C575.0 532.8 568.6 541.8 561.9 550.4C555.2 559.0 546.9 568.8 540.2 575.5C533.5 582.2 527.2 587.2 521.8 590.5C516.4 593.8 512.3 595.2 508.0 595.0C503.7 594.8 500.9 592.8 496.0 589.0C491.1 585.2 485.4 579.1 478.6 572.1C471.8 565.1 462.4 555.6 455.2 547.0C448.0 538.4 441.3 528.9 435.2 520.3C429.1 511.7 423.1 503.0 418.4 495.2C413.6 487.4 409.3 479.2 406.7 473.4C404.1 467.6 402.6 465.1 402.7 460.5Z" fill="#02ad4e"/><path d="M500.5 433.0C506.0 432.2 510.4 433.3 515.0 435.0C519.6 436.7 523.5 439.4 528.0 443.0C532.5 446.6 537.2 451.4 542.0 456.5C546.8 461.6 552.9 468.0 556.9 473.4C560.9 478.8 563.8 483.4 566.0 489.0C568.2 494.6 570.5 500.7 570.3 507.0C570.0 513.3 568.7 520.9 564.5 527.0C560.3 533.1 553.2 539.2 545.2 543.7C537.2 548.2 525.2 551.8 516.8 553.7C508.4 555.6 503.0 556.7 495.0 555.0C487.0 553.3 475.8 548.4 468.6 543.7C461.4 539.0 456.1 533.7 451.9 527.0C447.7 520.3 444.1 511.0 443.5 503.5C442.9 496.0 445.1 489.6 448.5 481.8C451.9 474.0 458.0 463.8 463.6 456.7C469.2 449.6 475.9 443.4 482.0 439.5C488.1 435.6 495.0 433.8 500.5 433.0Z" fill="#fdfdfd"/><circle cx="503.7" cy="500" r="25.6" fill="none" stroke="#02ad4e" stroke-width="7"/><path d="M477 500.5H530" stroke="#02ad4e" stroke-width="7.2"/><ellipse cx="503.7" cy="500" rx="9.6" ry="24" fill="none" stroke="#02ad4e" stroke-width="6.4"/><path d="M484.3 612L503.5 630L522.7 612V629.5L503.5 647.4L484.3 629.5Z" fill="#e6e6e6"/></g></svg>
<div class="a" style="left:203.5px;width:600px;text-align:center;top:703.5px;font-size:23.5px;line-height:30px;color:#02ad4e;font-weight:bold;-webkit-text-stroke:.3px #02ad4e">添加标题</div>
<div class="a" style="left:203.5px;width:600px;text-align:center;top:742.0px;font-size:15.5px;line-height:22px;color:#626262;font-weight:normal;">KOPPT一个做PPT的神器KOPPT一</div>
<div class="a" style="left:203.5px;width:600px;text-align:center;top:770.7px;font-size:15.5px;line-height:22px;color:#626262;font-weight:normal;">个做PPT的神器KOPPT一个做PPT</div>
<div class="a" style="left:203.5px;width:600px;text-align:center;top:799.4px;font-size:15.5px;line-height:22px;color:#626262;font-weight:normal;">的神器KOPPT一个做PPT的神器</div>
<div class="a" style="left:203.5px;width:600px;text-align:center;top:828.1px;font-size:15.5px;line-height:22px;color:#626262;font-weight:normal;">KOPPT一个做PPT的神器</div>
<svg class="a" style="left:687.9px;top:370px;" width="240" height="290" viewBox="687.9 370 240 290"><g transform="translate(307.9 0)"><path d="M518.3 387.0C522.5 387.0 526.3 387.0 530.3 389.7C534.3 392.4 536.3 392.2 542.3 403.1C548.2 414.0 558.3 437.7 566.0 455.0C573.7 472.3 584.2 496.0 588.7 506.9C593.2 517.8 592.2 514.7 592.8 520.3C593.3 525.9 593.2 534.7 592.0 540.3C590.8 545.9 588.9 549.8 585.3 553.7C581.7 557.6 575.9 561.6 570.3 563.7C564.7 565.8 562.8 565.9 551.9 566.3C541.0 566.7 519.5 566.3 505.0 566.0C490.5 565.7 475.8 565.4 465.0 564.6C454.2 563.8 447.8 562.8 440.0 561.0C432.2 559.2 425.3 557.7 418.4 553.7C411.5 549.7 402.8 542.6 398.4 537.0C393.9 531.4 392.6 526.5 391.7 520.3C390.8 514.1 390.8 507.6 393.0 500.0C395.2 492.4 398.5 484.3 405.0 475.0C411.5 465.7 422.0 454.0 432.0 444.0C442.0 434.0 455.1 422.8 464.8 415.1C474.5 407.4 483.5 402.0 490.2 397.7C496.9 393.4 500.3 391.3 505.0 389.5C509.7 387.7 514.1 387.0 518.3 387.0Z" fill="#e4e4e4"/><path d="M402.7 460.5C402.8 455.9 403.9 450.2 407.4 445.8C410.8 441.4 415.2 438.2 423.4 433.8C431.6 429.4 444.6 423.1 456.8 419.1C469.1 415.1 483.5 412.0 496.9 409.7C510.3 407.4 524.8 405.7 537.0 405.5C549.2 405.3 561.5 406.3 570.4 408.4C579.3 410.4 585.4 414.0 590.5 417.8C595.6 421.6 598.9 425.8 601.1 431.1C603.3 436.4 603.6 444.2 603.8 449.8C603.9 455.4 603.7 457.4 602.0 465.0C600.3 472.6 597.3 485.4 593.7 495.2C590.1 505.0 585.6 514.4 580.3 523.6C575.0 532.8 568.6 541.8 561.9 550.4C555.2 559.0 546.9 568.8 540.2 575.5C533.5 582.2 527.2 587.2 521.8 590.5C516.4 593.8 512.3 595.2 508.0 595.0C503.7 594.8 500.9 592.8 496.0 589.0C491.1 585.2 485.4 579.1 478.6 572.1C471.8 565.1 462.4 555.6 455.2 547.0C448.0 538.4 441.3 528.9 435.2 520.3C429.1 511.7 423.1 503.0 418.4 495.2C413.6 487.4 409.3 479.2 406.7 473.4C404.1 467.6 402.6 465.1 402.7 460.5Z" fill="#02ad4e"/><path d="M500.5 433.0C506.0 432.2 510.4 433.3 515.0 435.0C519.6 436.7 523.5 439.4 528.0 443.0C532.5 446.6 537.2 451.4 542.0 456.5C546.8 461.6 552.9 468.0 556.9 473.4C560.9 478.8 563.8 483.4 566.0 489.0C568.2 494.6 570.5 500.7 570.3 507.0C570.0 513.3 568.7 520.9 564.5 527.0C560.3 533.1 553.2 539.2 545.2 543.7C537.2 548.2 525.2 551.8 516.8 553.7C508.4 555.6 503.0 556.7 495.0 555.0C487.0 553.3 475.8 548.4 468.6 543.7C461.4 539.0 456.1 533.7 451.9 527.0C447.7 520.3 444.1 511.0 443.5 503.5C442.9 496.0 445.1 489.6 448.5 481.8C451.9 474.0 458.0 463.8 463.6 456.7C469.2 449.6 475.9 443.4 482.0 439.5C488.1 435.6 495.0 433.8 500.5 433.0Z" fill="#fdfdfd"/><g transform="translate(-307.9 0)"><path d="M783 473.5C789 475 793 478.5 793 486V509C793 513 797 516 801 517.5H828C833 516 837 513 838.5 509L842 491L795 485.5" fill="none" stroke="#02ad4e" stroke-width="6" stroke-linecap="round" stroke-linejoin="round"/><path d="M805 487L804 516M816.5 488.5L815.5 516M828.5 490L827.5 516" stroke="#02ad4e" stroke-width="5.8"/><circle cx="793" cy="523.3" r="7" fill="#02ad4e"/><circle cx="834.8" cy="523.3" r="7" fill="#02ad4e"/></g><path d="M484.3 612L503.5 630L522.7 612V629.5L503.5 647.4L484.3 629.5Z" fill="#e6e6e6"/></g></svg>
<div class="a" style="left:511.4px;width:600px;text-align:center;top:703.5px;font-size:23.5px;line-height:30px;color:#02ad4e;font-weight:bold;-webkit-text-stroke:.3px #02ad4e">添加标题</div>
<div class="a" style="left:511.4px;width:600px;text-align:center;top:742.0px;font-size:15.5px;line-height:22px;color:#626262;font-weight:normal;">KOPPT一个做PPT的神器KOPPT一</div>
<div class="a" style="left:511.4px;width:600px;text-align:center;top:770.7px;font-size:15.5px;line-height:22px;color:#626262;font-weight:normal;">个做PPT的神器KOPPT一个做PPT</div>
<div class="a" style="left:511.4px;width:600px;text-align:center;top:799.4px;font-size:15.5px;line-height:22px;color:#626262;font-weight:normal;">的神器KOPPT一个做PPT的神器</div>
<div class="a" style="left:511.4px;width:600px;text-align:center;top:828.1px;font-size:15.5px;line-height:22px;color:#626262;font-weight:normal;">KOPPT一个做PPT的神器</div>
<svg class="a" style="left:972.5px;top:370px;" width="240" height="290" viewBox="972.5 370 240 290"><g transform="translate(592.5 0)"><path d="M518.3 387.0C522.5 387.0 526.3 387.0 530.3 389.7C534.3 392.4 536.3 392.2 542.3 403.1C548.2 414.0 558.3 437.7 566.0 455.0C573.7 472.3 584.2 496.0 588.7 506.9C593.2 517.8 592.2 514.7 592.8 520.3C593.3 525.9 593.2 534.7 592.0 540.3C590.8 545.9 588.9 549.8 585.3 553.7C581.7 557.6 575.9 561.6 570.3 563.7C564.7 565.8 562.8 565.9 551.9 566.3C541.0 566.7 519.5 566.3 505.0 566.0C490.5 565.7 475.8 565.4 465.0 564.6C454.2 563.8 447.8 562.8 440.0 561.0C432.2 559.2 425.3 557.7 418.4 553.7C411.5 549.7 402.8 542.6 398.4 537.0C393.9 531.4 392.6 526.5 391.7 520.3C390.8 514.1 390.8 507.6 393.0 500.0C395.2 492.4 398.5 484.3 405.0 475.0C411.5 465.7 422.0 454.0 432.0 444.0C442.0 434.0 455.1 422.8 464.8 415.1C474.5 407.4 483.5 402.0 490.2 397.7C496.9 393.4 500.3 391.3 505.0 389.5C509.7 387.7 514.1 387.0 518.3 387.0Z" fill="#e4e4e4"/><path d="M402.7 460.5C402.8 455.9 403.9 450.2 407.4 445.8C410.8 441.4 415.2 438.2 423.4 433.8C431.6 429.4 444.6 423.1 456.8 419.1C469.1 415.1 483.5 412.0 496.9 409.7C510.3 407.4 524.8 405.7 537.0 405.5C549.2 405.3 561.5 406.3 570.4 408.4C579.3 410.4 585.4 414.0 590.5 417.8C595.6 421.6 598.9 425.8 601.1 431.1C603.3 436.4 603.6 444.2 603.8 449.8C603.9 455.4 603.7 457.4 602.0 465.0C600.3 472.6 597.3 485.4 593.7 495.2C590.1 505.0 585.6 514.4 580.3 523.6C575.0 532.8 568.6 541.8 561.9 550.4C555.2 559.0 546.9 568.8 540.2 575.5C533.5 582.2 527.2 587.2 521.8 590.5C516.4 593.8 512.3 595.2 508.0 595.0C503.7 594.8 500.9 592.8 496.0 589.0C491.1 585.2 485.4 579.1 478.6 572.1C471.8 565.1 462.4 555.6 455.2 547.0C448.0 538.4 441.3 528.9 435.2 520.3C429.1 511.7 423.1 503.0 418.4 495.2C413.6 487.4 409.3 479.2 406.7 473.4C404.1 467.6 402.6 465.1 402.7 460.5Z" fill="#02ad4e"/><path d="M500.5 433.0C506.0 432.2 510.4 433.3 515.0 435.0C519.6 436.7 523.5 439.4 528.0 443.0C532.5 446.6 537.2 451.4 542.0 456.5C546.8 461.6 552.9 468.0 556.9 473.4C560.9 478.8 563.8 483.4 566.0 489.0C568.2 494.6 570.5 500.7 570.3 507.0C570.0 513.3 568.7 520.9 564.5 527.0C560.3 533.1 553.2 539.2 545.2 543.7C537.2 548.2 525.2 551.8 516.8 553.7C508.4 555.6 503.0 556.7 495.0 555.0C487.0 553.3 475.8 548.4 468.6 543.7C461.4 539.0 456.1 533.7 451.9 527.0C447.7 520.3 444.1 511.0 443.5 503.5C442.9 496.0 445.1 489.6 448.5 481.8C451.9 474.0 458.0 463.8 463.6 456.7C469.2 449.6 475.9 443.4 482.0 439.5C488.1 435.6 495.0 433.8 500.5 433.0Z" fill="#fdfdfd"/><g transform="translate(-592.5 0)"><rect x="1085.7" y="484.9" width="33.5" height="44.3" rx="7" fill="none" stroke="#02ad4e" stroke-width="5.4"/><path d="M1077.5 516C1074.5 515 1072.7 512 1072.7 508V479C1072.7 475 1075.5 471.8 1080 471.8H1099C1103 471.8 1106 474 1107 477" fill="none" stroke="#02ad4e" stroke-width="5.4"/><path d="M1092.2 496H1113.1M1092.2 505.8H1113.1M1092.2 514.8H1113.1" stroke="#02ad4e" stroke-width="3.8"/></g><path d="M484.3 612L503.5 630L522.7 612V629.5L503.5 647.4L484.3 629.5Z" fill="#e6e6e6"/></g></svg>
<div class="a" style="left:796.0px;width:600px;text-align:center;top:703.5px;font-size:23.5px;line-height:30px;color:#02ad4e;font-weight:bold;-webkit-text-stroke:.3px #02ad4e">添加标题</div>
<div class="a" style="left:796.0px;width:600px;text-align:center;top:742.0px;font-size:15.5px;line-height:22px;color:#626262;font-weight:normal;">KOPPT一个做PPT的神器KOPPT一</div>
<div class="a" style="left:796.0px;width:600px;text-align:center;top:770.7px;font-size:15.5px;line-height:22px;color:#626262;font-weight:normal;">个做PPT的神器KOPPT一个做PPT</div>
<div class="a" style="left:796.0px;width:600px;text-align:center;top:799.4px;font-size:15.5px;line-height:22px;color:#626262;font-weight:normal;">的神器KOPPT一个做PPT的神器</div>
<div class="a" style="left:796.0px;width:600px;text-align:center;top:828.1px;font-size:15.5px;line-height:22px;color:#626262;font-weight:normal;">KOPPT一个做PPT的神器</div>
<svg class="a" style="left:1287px;top:370px;" width="240" height="290" viewBox="1287 370 240 290"><g transform="translate(907 0)"><path d="M518.3 387.0C522.5 387.0 526.3 387.0 530.3 389.7C534.3 392.4 536.3 392.2 542.3 403.1C548.2 414.0 558.3 437.7 566.0 455.0C573.7 472.3 584.2 496.0 588.7 506.9C593.2 517.8 592.2 514.7 592.8 520.3C593.3 525.9 593.2 534.7 592.0 540.3C590.8 545.9 588.9 549.8 585.3 553.7C581.7 557.6 575.9 561.6 570.3 563.7C564.7 565.8 562.8 565.9 551.9 566.3C541.0 566.7 519.5 566.3 505.0 566.0C490.5 565.7 475.8 565.4 465.0 564.6C454.2 563.8 447.8 562.8 440.0 561.0C432.2 559.2 425.3 557.7 418.4 553.7C411.5 549.7 402.8 542.6 398.4 537.0C393.9 531.4 392.6 526.5 391.7 520.3C390.8 514.1 390.8 507.6 393.0 500.0C395.2 492.4 398.5 484.3 405.0 475.0C411.5 465.7 422.0 454.0 432.0 444.0C442.0 434.0 455.1 422.8 464.8 415.1C474.5 407.4 483.5 402.0 490.2 397.7C496.9 393.4 500.3 391.3 505.0 389.5C509.7 387.7 514.1 387.0 518.3 387.0Z" fill="#e4e4e4"/><path d="M402.7 460.5C402.8 455.9 403.9 450.2 407.4 445.8C410.8 441.4 415.2 438.2 423.4 433.8C431.6 429.4 444.6 423.1 456.8 419.1C469.1 415.1 483.5 412.0 496.9 409.7C510.3 407.4 524.8 405.7 537.0 405.5C549.2 405.3 561.5 406.3 570.4 408.4C579.3 410.4 585.4 414.0 590.5 417.8C595.6 421.6 598.9 425.8 601.1 431.1C603.3 436.4 603.6 444.2 603.8 449.8C603.9 455.4 603.7 457.4 602.0 465.0C600.3 472.6 597.3 485.4 593.7 495.2C590.1 505.0 585.6 514.4 580.3 523.6C575.0 532.8 568.6 541.8 561.9 550.4C555.2 559.0 546.9 568.8 540.2 575.5C533.5 582.2 527.2 587.2 521.8 590.5C516.4 593.8 512.3 595.2 508.0 595.0C503.7 594.8 500.9 592.8 496.0 589.0C491.1 585.2 485.4 579.1 478.6 572.1C471.8 565.1 462.4 555.6 455.2 547.0C448.0 538.4 441.3 528.9 435.2 520.3C429.1 511.7 423.1 503.0 418.4 495.2C413.6 487.4 409.3 479.2 406.7 473.4C404.1 467.6 402.6 465.1 402.7 460.5Z" fill="#02ad4e"/><path d="M500.5 433.0C506.0 432.2 510.4 433.3 515.0 435.0C519.6 436.7 523.5 439.4 528.0 443.0C532.5 446.6 537.2 451.4 542.0 456.5C546.8 461.6 552.9 468.0 556.9 473.4C560.9 478.8 563.8 483.4 566.0 489.0C568.2 494.6 570.5 500.7 570.3 507.0C570.0 513.3 568.7 520.9 564.5 527.0C560.3 533.1 553.2 539.2 545.2 543.7C537.2 548.2 525.2 551.8 516.8 553.7C508.4 555.6 503.0 556.7 495.0 555.0C487.0 553.3 475.8 548.4 468.6 543.7C461.4 539.0 456.1 533.7 451.9 527.0C447.7 520.3 444.1 511.0 443.5 503.5C442.9 496.0 445.1 489.6 448.5 481.8C451.9 474.0 458.0 463.8 463.6 456.7C469.2 449.6 475.9 443.4 482.0 439.5C488.1 435.6 495.0 433.8 500.5 433.0Z" fill="#fdfdfd"/><g transform="translate(-907 0)"><path d="M1403.4 470.8A29.3 29.3 0 1 1 1381.5 493.5" fill="none" stroke="#02ad4e" stroke-width="5.4"/><path d="M1403.4 481.6A18.5 18.5 0 1 1 1392.3 493.5" fill="none" stroke="#02ad4e" stroke-width="5.4"/><circle cx="1410.7" cy="499.5" r="7.1" fill="#02ad4e"/><path d="M1395 484.5L1410 499" stroke="#02ad4e" stroke-width="3.8"/><path d="M1386.3 468.4L1397.6 479.6L1398.8 487.6L1390.5 487.2L1378.8 475.5L1385.9 475.5Z" fill="#02ad4e"/></g><path d="M484.3 612L503.5 630L522.7 612V629.5L503.5 647.4L484.3 629.5Z" fill="#e6e6e6"/></g></svg>
<div class="a" style="left:1110.5px;width:600px;text-align:center;top:703.5px;font-size:23.5px;line-height:30px;color:#02ad4e;font-weight:bold;-webkit-text-stroke:.3px #02ad4e">添加标题</div>
<div class="a" style="left:1110.5px;width:600px;text-align:center;top:742.0px;font-size:15.5px;line-height:22px;color:#626262;font-weight:normal;">KOPPT一个做PPT的神器KOPPT一</div>
<div class="a" style="left:1110.5px;width:600px;text-align:center;top:770.7px;font-size:15.5px;line-height:22px;color:#626262;font-weight:normal;">个做PPT的神器KOPPT一个做PPT</div>
<div class="a" style="left:1110.5px;width:600px;text-align:center;top:799.4px;font-size:15.5px;line-height:22px;color:#626262;font-weight:normal;">的神器KOPPT一个做PPT的神器</div>
<div class="a" style="left:1110.5px;width:600px;text-align:center;top:828.1px;font-size:15.5px;line-height:22px;color:#626262;font-weight:normal;">KOPPT一个做PPT的神器</div></div>
<svg class="a" style="left:401px;top:646px;" width="14" height="22" viewBox="0 0 14 22"><path d="M1.5 2.5V18.5L5 15L7.8 20.8L10 19.8L7.5 14.3H12.5Z" fill="#fff" stroke="#222" stroke-width="1.1" stroke-linejoin="round"/></svg>
<div class="a" style="left:0;top:167px;width:170px;height:771px;overflow:hidden">
<div class="a" style="left:0px;top:14px;font-size:16.5px;line-height:20px;color:#444">21</div>
<svg class="a" style="left:24px;top:19px" width="126" height="72" viewBox="0 0 126 72"><rect x=".5" y=".5" width="125" height="71" fill="#fdfdfd" stroke="#c8c8c8"/><g opacity=".12" fill="#888"><path d="M26 52c6-6 14-4 20-7s14-2 20 0 12 2 14 6-6 8-14 10-10 6-18 7-12-2-16-6-10-5-6-10z"/></g><rect x="15.2" y="20.1" width="45.8" height="31.6" fill="#02ad4e"/><rect x="17.7" y="22.6" width="40.8" height="26.6" fill="none" stroke="#fff" stroke-width=".9"/><path d="M51 23.5h6v6z" fill="#fff"/><path d="M19 48.5h3.5v-3.5z" fill="#fff"/><text x="38.2" y="40.5" font-size="18" font-weight="bold" fill="#fff" text-anchor="middle" font-family="Liberation Sans">04</text><rect x="31" y="45.5" width="14" height="1.2" fill="#fff" opacity=".8"/><text x="69.5" y="35" font-size="8.6" font-weight="bold" fill="#2b2b3c">未来计划</text><rect x="69.6" y="37.8" width="24" height="1.3" fill="#777" opacity="0.8"/><rect x="69.6" y="41.5" width="42" height="1.1" fill="#999" opacity="0.6"/><rect x="69.6" y="44.1" width="42" height="1.1" fill="#999" opacity="0.6"/></svg>
<div class="a" style="left:0px;top:104px;font-size:16.5px;line-height:20px;color:#444">22</div>
<svg class="a" style="left:24px;top:109px" width="126" height="72" viewBox="0 0 126 72"><rect x=".5" y=".5" width="125" height="71" fill="#fdfdfd" stroke="#c8c8c8"/><circle cx="9.9" cy="7.5" r="3.4" fill="#02ad4e"/><rect x="15.5" y="6.3" width="24" height="2.4" fill="#555" opacity=".55"/><rect x="103.5" y="6.5" width="3" height="2.6" fill="#02ad4e" opacity=".9"/><rect x="107" y="6.8" width="13" height="2" fill="#02ad4e" opacity=".6"/><circle cx="12.4" cy="21.3" r="3.3" fill="#02ad4e"/><rect x="19" y="18.7" width="8" height="1" fill="#aaa"/><rect x="19" y="20.8" width="35" height="2" fill="#999" opacity=".7"/><circle cx="12.4" cy="31.4" r="3.3" fill="#02ad4e"/><rect x="19" y="28.799999999999997" width="8" height="1" fill="#aaa"/><rect x="19" y="30.9" width="35" height="2" fill="#999" opacity=".7"/><circle cx="12.4" cy="41.4" r="3.3" fill="#02ad4e"/><rect x="19" y="38.8" width="8" height="1" fill="#aaa"/><rect x="19" y="40.9" width="35" height="2" fill="#999" opacity=".7"/><circle cx="12.4" cy="51" r="3.3" fill="#02ad4e"/><rect x="19" y="48.4" width="8" height="1" fill="#aaa"/><rect x="19" y="50.5" width="35" height="2" fill="#999" opacity=".7"/><circle cx="12.4" cy="60.6" r="3.3" fill="#02ad4e"/><rect x="19" y="58.0" width="8" height="1" fill="#aaa"/><rect x="19" y="60.1" width="35" height="2" fill="#999" opacity=".7"/><path d="M59.6 42.2A8.4 8.4 0 1 0 70.5 41.4A8.4 8.4 0 1 1 80.75 41.4A8.4 8.4 0 1 0 91.4 41.4A8.4 8.4 0 1 1 102.05 41.4A8.4 8.4 0 1 0 113.2 42.2" fill="none" stroke="#02ad4e" stroke-width="1.3"/><g fill="#02ad4e"><circle cx="65.5" cy="56.5" r="1.4"/><circle cx="75.5" cy="26.3" r="1.4"/><circle cx="86" cy="56.5" r="1.4"/><circle cx="96.8" cy="26.3" r="1.4"/><circle cx="107.3" cy="56.5" r="1.4"/></g><rect x="62.0" y="47.5" width="7" height="1.2" fill="#999" opacity=".6"/><rect x="72.0" y="34.1" width="7" height="1.2" fill="#999" opacity=".6"/><rect x="82.5" y="47.5" width="7" height="1.2" fill="#999" opacity=".6"/><rect x="93.3" y="34.1" width="7" height="1.2" fill="#999" opacity=".6"/><rect x="103.8" y="47.5" width="7" height="1.2" fill="#999" opacity=".6"/></svg>
<div class="a" style="left:0px;top:194px;font-size:16.5px;line-height:20px;color:#444">23</div>
<svg class="a" style="left:24px;top:199px" width="126" height="72" viewBox="0 0 126 72"><rect x=".5" y=".5" width="125" height="71" fill="#fdfdfd" stroke="#c8c8c8"/><circle cx="9.9" cy="7.5" r="3.4" fill="#02ad4e"/><rect x="15.5" y="6.3" width="14" height="2.4" fill="#555" opacity=".55"/><rect x="103.5" y="6.5" width="3" height="2.6" fill="#02ad4e" opacity=".9"/><rect x="107" y="6.8" width="13" height="2" fill="#02ad4e" opacity=".6"/><rect x="2" y="18.1" width="122.3" height="45.1" fill="#02ad4e"/><circle cx="22" cy="33.1" r="8.6" fill="none" stroke="#e9f7ee" stroke-width="1.4"/><text x="22" y="35" font-size="5.2" font-weight="bold" fill="#fff" text-anchor="middle" font-family="Liberation Sans">70%</text><rect x="18" y="43.5" width="8" height="1" fill="#fff" opacity="0.8"/><rect x="11" y="47.0" width="22" height="1" fill="#fff" opacity="0.75"/><rect x="11" y="49.6" width="22" height="1" fill="#fff" opacity="0.75"/><rect x="17" y="52.2" width="10" height="1" fill="#fff" opacity="0.75"/><circle cx="49.2" cy="33.1" r="8.6" fill="none" stroke="#e9f7ee" stroke-width="1.4"/><text x="49.2" y="35" font-size="5.2" font-weight="bold" fill="#fff" text-anchor="middle" font-family="Liberation Sans">80%</text><rect x="45.2" y="43.5" width="8" height="1" fill="#fff" opacity="0.8"/><rect x="38.2" y="47.0" width="22" height="1" fill="#fff" opacity="0.75"/><rect x="38.2" y="49.6" width="22" height="1" fill="#fff" opacity="0.75"/><rect x="44.2" y="52.2" width="10" height="1" fill="#fff" opacity="0.75"/><circle cx="76.5" cy="33.1" r="8.6" fill="none" stroke="#e9f7ee" stroke-width="1.4"/><text x="76.5" y="35" font-size="5.2" font-weight="bold" fill="#fff" text-anchor="middle" font-family="Liberation Sans">60%</text><rect x="72.5" y="43.5" width="8" height="1" fill="#fff" opacity="0.8"/><rect x="65.5" y="47.0" width="22" height="1" fill="#fff" opacity="0.75"/><rect x="65.5" y="49.6" width="22" height="1" fill="#fff" opacity="0.75"/><rect x="71.5" y="52.2" width="10" height="1" fill="#fff" opacity="0.75"/><circle cx="103.8" cy="33.1" r="8.6" fill="none" stroke="#e9f7ee" stroke-width="1.4"/><text x="103.8" y="35" font-size="5.2" font-weight="bold" fill="#fff" text-anchor="middle" font-family="Liberation Sans">90%</text><rect x="99.8" y="43.5" width="8" height="1" fill="#fff" opacity="0.8"/><rect x="92.8" y="47.0" width="22" height="1" fill="#fff" opacity="0.75"/><rect x="92.8" y="49.6" width="22" height="1" fill="#fff" opacity="0.75"/><rect x="98.8" y="52.2" width="10" height="1" fill="#fff" opacity="0.75"/></svg>
<div class="a" style="left:0px;top:284px;font-size:16.5px;line-height:20px;color:#c43e1c">24</div>
<div class="a" style="left:22px;top:287px;width:130px;height:76px;background:#c5401e"></div>
<svg class="a" style="left:24px;top:289px" width="126" height="72" viewBox="0 0 126 72"><rect x="1" y="1" width="124" height="70" fill="#fdfdfd"/><circle cx="9.9" cy="7.5" r="3.4" fill="#02ad4e"/><rect x="15.5" y="6.3" width="16" height="2.4" fill="#555" opacity=".55"/><rect x="103.5" y="6.5" width="3" height="2.6" fill="#02ad4e" opacity=".9"/><rect x="107" y="6.8" width="13" height="2" fill="#02ad4e" opacity=".6"/><g transform="translate(20.6 32.2) scale(0.098) translate(-503.5 -500)"><path d="M402.7 460.5C402.8 455.9 403.9 450.2 407.4 445.8C410.8 441.4 415.2 438.2 423.4 433.8C431.6 429.4 444.6 423.1 456.8 419.1C469.1 415.1 483.5 412.0 496.9 409.7C510.3 407.4 524.8 405.7 537.0 405.5C549.2 405.3 561.5 406.3 570.4 408.4C579.3 410.4 585.4 414.0 590.5 417.8C595.6 421.6 598.9 425.8 601.1 431.1C603.3 436.4 603.6 444.2 603.8 449.8C603.9 455.4 603.7 457.4 602.0 465.0C600.3 472.6 597.3 485.4 593.7 495.2C590.1 505.0 585.6 514.4 580.3 523.6C575.0 532.8 568.6 541.8 561.9 550.4C555.2 559.0 546.9 568.8 540.2 575.5C533.5 582.2 527.2 587.2 521.8 590.5C516.4 593.8 512.3 595.2 508.0 595.0C503.7 594.8 500.9 592.8 496.0 589.0C491.1 585.2 485.4 579.1 478.6 572.1C471.8 565.1 462.4 555.6 455.2 547.0C448.0 538.4 441.3 528.9 435.2 520.3C429.1 511.7 423.1 503.0 418.4 495.2C413.6 487.4 409.3 479.2 406.7 473.4C404.1 467.6 402.6 465.1 402.7 460.5Z" fill="#02ad4e"/><path d="M500.5 433.0C506.0 432.2 510.4 433.3 515.0 435.0C519.6 436.7 523.5 439.4 528.0 443.0C532.5 446.6 537.2 451.4 542.0 456.5C546.8 461.6 552.9 468.0 556.9 473.4C560.9 478.8 563.8 483.4 566.0 489.0C568.2 494.6 570.5 500.7 570.3 507.0C570.0 513.3 568.7 520.9 564.5 527.0C560.3 533.1 553.2 539.2 545.2 543.7C537.2 548.2 525.2 551.8 516.8 553.7C508.4 555.6 503.0 556.7 495.0 555.0C487.0 553.3 475.8 548.4 468.6 543.7C461.4 539.0 456.1 533.7 451.9 527.0C447.7 520.3 444.1 511.0 443.5 503.5C442.9 496.0 445.1 489.6 448.5 481.8C451.9 474.0 458.0 463.8 463.6 456.7C469.2 449.6 475.9 443.4 482.0 439.5C488.1 435.6 495.0 433.8 500.5 433.0Z" fill="#fdfdfd"/><circle cx="503.7" cy="500" r="24" fill="none" stroke="#02ad4e" stroke-width="10"/></g><rect x="16.1" y="51.7" width="9" height="1.1" fill="#777" opacity="0.7"/><rect x="8.600000000000001" y="55.0" width="24" height="1.3" fill="#888" opacity="0.6"/><rect x="8.600000000000001" y="57.9" width="24" height="1.3" fill="#888" opacity="0.6"/><rect x="8.600000000000001" y="60.8" width="24" height="1.3" fill="#888" opacity="0.6"/><rect x="12.600000000000001" y="63.6" width="16" height="1.3" fill="#888" opacity="0.6"/><g transform="translate(49.8 32.2) scale(0.098) translate(-503.5 -500)"><path d="M402.7 460.5C402.8 455.9 403.9 450.2 407.4 445.8C410.8 441.4 415.2 438.2 423.4 433.8C431.6 429.4 444.6 423.1 456.8 419.1C469.1 415.1 483.5 412.0 496.9 409.7C510.3 407.4 524.8 405.7 537.0 405.5C549.2 405.3 561.5 406.3 570.4 408.4C579.3 410.4 585.4 414.0 590.5 417.8C595.6 421.6 598.9 425.8 601.1 431.1C603.3 436.4 603.6 444.2 603.8 449.8C603.9 455.4 603.7 457.4 602.0 465.0C600.3 472.6 597.3 485.4 593.7 495.2C590.1 505.0 585.6 514.4 580.3 523.6C575.0 532.8 568.6 541.8 561.9 550.4C555.2 559.0 546.9 568.8 540.2 575.5C533.5 582.2 527.2 587.2 521.8 590.5C516.4 593.8 512.3 595.2 508.0 595.0C503.7 594.8 500.9 592.8 496.0 589.0C491.1 585.2 485.4 579.1 478.6 572.1C471.8 565.1 462.4 555.6 455.2 547.0C448.0 538.4 441.3 528.9 435.2 520.3C429.1 511.7 423.1 503.0 418.4 495.2C413.6 487.4 409.3 479.2 406.7 473.4C404.1 467.6 402.6 465.1 402.7 460.5Z" fill="#02ad4e"/><path d="M500.5 433.0C506.0 432.2 510.4 433.3 515.0 435.0C519.6 436.7 523.5 439.4 528.0 443.0C532.5 446.6 537.2 451.4 542.0 456.5C546.8 461.6 552.9 468.0 556.9 473.4C560.9 478.8 563.8 483.4 566.0 489.0C568.2 494.6 570.5 500.7 570.3 507.0C570.0 513.3 568.7 520.9 564.5 527.0C560.3 533.1 553.2 539.2 545.2 543.7C537.2 548.2 525.2 551.8 516.8 553.7C508.4 555.6 503.0 556.7 495.0 555.0C487.0 553.3 475.8 548.4 468.6 543.7C461.4 539.0 456.1 533.7 451.9 527.0C447.7 520.3 444.1 511.0 443.5 503.5C442.9 496.0 445.1 489.6 448.5 481.8C451.9 474.0 458.0 463.8 463.6 456.7C469.2 449.6 475.9 443.4 482.0 439.5C488.1 435.6 495.0 433.8 500.5 433.0Z" fill="#fdfdfd"/><circle cx="503.7" cy="500" r="24" fill="none" stroke="#02ad4e" stroke-width="10"/></g><rect x="45.3" y="51.7" width="9" height="1.1" fill="#777" opacity="0.7"/><rect x="37.8" y="55.0" width="24" height="1.3" fill="#888" opacity="0.6"/><rect x="37.8" y="57.9" width="24" height="1.3" fill="#888" opacity="0.6"/><rect x="37.8" y="60.8" width="24" height="1.3" fill="#888" opacity="0.6"/><rect x="41.8" y="63.6" width="16" height="1.3" fill="#888" opacity="0.6"/><g transform="translate(77 32.2) scale(0.098) translate(-503.5 -500)"><path d="M402.7 460.5C402.8 455.9 403.9 450.2 407.4 445.8C410.8 441.4 415.2 438.2 423.4 433.8C431.6 429.4 444.6 423.1 456.8 419.1C469.1 415.1 483.5 412.0 496.9 409.7C510.3 407.4 524.8 405.7 537.0 405.5C549.2 405.3 561.5 406.3 570.4 408.4C579.3 410.4 585.4 414.0 590.5 417.8C595.6 421.6 598.9 425.8 601.1 431.1C603.3 436.4 603.6 444.2 603.8 449.8C603.9 455.4 603.7 457.4 602.0 465.0C600.3 472.6 597.3 485.4 593.7 495.2C590.1 505.0 585.6 514.4 580.3 523.6C575.0 532.8 568.6 541.8 561.9 550.4C555.2 559.0 546.9 568.8 540.2 575.5C533.5 582.2 527.2 587.2 521.8 590.5C516.4 593.8 512.3 595.2 508.0 595.0C503.7 594.8 500.9 592.8 496.0 589.0C491.1 585.2 485.4 579.1 478.6 572.1C471.8 565.1 462.4 555.6 455.2 547.0C448.0 538.4 441.3 528.9 435.2 520.3C429.1 511.7 423.1 503.0 418.4 495.2C413.6 487.4 409.3 479.2 406.7 473.4C404.1 467.6 402.6 465.1 402.7 460.5Z" fill="#02ad4e"/><path d="M500.5 433.0C506.0 432.2 510.4 433.3 515.0 435.0C519.6 436.7 523.5 439.4 528.0 443.0C532.5 446.6 537.2 451.4 542.0 456.5C546.8 461.6 552.9 468.0 556.9 473.4C560.9 478.8 563.8 483.4 566.0 489.0C568.2 494.6 570.5 500.7 570.3 507.0C570.0 513.3 568.7 520.9 564.5 527.0C560.3 533.1 553.2 539.2 545.2 543.7C537.2 548.2 525.2 551.8 516.8 553.7C508.4 555.6 503.0 556.7 495.0 555.0C487.0 553.3 475.8 548.4 468.6 543.7C461.4 539.0 456.1 533.7 451.9 527.0C447.7 520.3 444.1 511.0 443.5 503.5C442.9 496.0 445.1 489.6 448.5 481.8C451.9 474.0 458.0 463.8 463.6 456.7C469.2 449.6 475.9 443.4 482.0 439.5C488.1 435.6 495.0 433.8 500.5 433.0Z" fill="#fdfdfd"/><circle cx="503.7" cy="500" r="24" fill="none" stroke="#02ad4e" stroke-width="10"/></g><rect x="72.5" y="51.7" width="9" height="1.1" fill="#777" opacity="0.7"/><rect x="65" y="55.0" width="24" height="1.3" fill="#888" opacity="0.6"/><rect x="65" y="57.9" width="24" height="1.3" fill="#888" opacity="0.6"/><rect x="65" y="60.8" width="24" height="1.3" fill="#888" opacity="0.6"/><rect x="69" y="63.6" width="16" height="1.3" fill="#888" opacity="0.6"/><g transform="translate(106.5 32.2) scale(0.098) translate(-503.5 -500)"><path d="M402.7 460.5C402.8 455.9 403.9 450.2 407.4 445.8C410.8 441.4 415.2 438.2 423.4 433.8C431.6 429.4 444.6 423.1 456.8 419.1C469.1 415.1 483.5 412.0 496.9 409.7C510.3 407.4 524.8 405.7 537.0 405.5C549.2 405.3 561.5 406.3 570.4 408.4C579.3 410.4 585.4 414.0 590.5 417.8C595.6 421.6 598.9 425.8 601.1 431.1C603.3 436.4 603.6 444.2 603.8 449.8C603.9 455.4 603.7 457.4 602.0 465.0C600.3 472.6 597.3 485.4 593.7 495.2C590.1 505.0 585.6 514.4 580.3 523.6C575.0 532.8 568.6 541.8 561.9 550.4C555.2 559.0 546.9 568.8 540.2 575.5C533.5 582.2 527.2 587.2 521.8 590.5C516.4 593.8 512.3 595.2 508.0 595.0C503.7 594.8 500.9 592.8 496.0 589.0C491.1 585.2 485.4 579.1 478.6 572.1C471.8 565.1 462.4 555.6 455.2 547.0C448.0 538.4 441.3 528.9 435.2 520.3C429.1 511.7 423.1 503.0 418.4 495.2C413.6 487.4 409.3 479.2 406.7 473.4C404.1 467.6 402.6 465.1 402.7 460.5Z" fill="#02ad4e"/><path d="M500.5 433.0C506.0 432.2 510.4 433.3 515.0 435.0C519.6 436.7 523.5 439.4 528.0 443.0C532.5 446.6 537.2 451.4 542.0 456.5C546.8 461.6 552.9 468.0 556.9 473.4C560.9 478.8 563.8 483.4 566.0 489.0C568.2 494.6 570.5 500.7 570.3 507.0C570.0 513.3 568.7 520.9 564.5 527.0C560.3 533.1 553.2 539.2 545.2 543.7C537.2 548.2 525.2 551.8 516.8 553.7C508.4 555.6 503.0 556.7 495.0 555.0C487.0 553.3 475.8 548.4 468.6 543.7C461.4 539.0 456.1 533.7 451.9 527.0C447.7 520.3 444.1 511.0 443.5 503.5C442.9 496.0 445.1 489.6 448.5 481.8C451.9 474.0 458.0 463.8 463.6 456.7C469.2 449.6 475.9 443.4 482.0 439.5C488.1 435.6 495.0 433.8 500.5 433.0Z" fill="#fdfdfd"/><circle cx="503.7" cy="500" r="24" fill="none" stroke="#02ad4e" stroke-width="10"/></g><rect x="102.0" y="51.7" width="9" height="1.1" fill="#777" opacity="0.7"/><rect x="94.5" y="55.0" width="24" height="1.3" fill="#888" opacity="0.6"/><rect x="94.5" y="57.9" width="24" height="1.3" fill="#888" opacity="0.6"/><rect x="94.5" y="60.8" width="24" height="1.3" fill="#888" opacity="0.6"/><rect x="98.5" y="63.6" width="16" height="1.3" fill="#888" opacity="0.6"/></svg>
<div class="a" style="left:0px;top:374px;font-size:16.5px;line-height:20px;color:#444">25</div>
<svg class="a" style="left:24px;top:379px" width="126" height="72" viewBox="0 0 126 72"><rect x=".5" y=".5" width="125" height="71" fill="#fdfdfd" stroke="#c8c8c8"/><circle cx="9.9" cy="7.5" r="3.4" fill="#02ad4e"/><rect x="15.5" y="6.3" width="16" height="2.4" fill="#555" opacity=".55"/><rect x="103.5" y="6.5" width="3" height="2.6" fill="#02ad4e" opacity=".9"/><rect x="107" y="6.8" width="13" height="2" fill="#02ad4e" opacity=".6"/><g transform="translate(27.4 31) scale(0.1) translate(-503.5 -500)"><path d="M402.7 460.5C402.8 455.9 403.9 450.2 407.4 445.8C410.8 441.4 415.2 438.2 423.4 433.8C431.6 429.4 444.6 423.1 456.8 419.1C469.1 415.1 483.5 412.0 496.9 409.7C510.3 407.4 524.8 405.7 537.0 405.5C549.2 405.3 561.5 406.3 570.4 408.4C579.3 410.4 585.4 414.0 590.5 417.8C595.6 421.6 598.9 425.8 601.1 431.1C603.3 436.4 603.6 444.2 603.8 449.8C603.9 455.4 603.7 457.4 602.0 465.0C600.3 472.6 597.3 485.4 593.7 495.2C590.1 505.0 585.6 514.4 580.3 523.6C575.0 532.8 568.6 541.8 561.9 550.4C555.2 559.0 546.9 568.8 540.2 575.5C533.5 582.2 527.2 587.2 521.8 590.5C516.4 593.8 512.3 595.2 508.0 595.0C503.7 594.8 500.9 592.8 496.0 589.0C491.1 585.2 485.4 579.1 478.6 572.1C471.8 565.1 462.4 555.6 455.2 547.0C448.0 538.4 441.3 528.9 435.2 520.3C429.1 511.7 423.1 503.0 418.4 495.2C413.6 487.4 409.3 479.2 406.7 473.4C404.1 467.6 402.6 465.1 402.7 460.5Z" fill="#02ad4e"/><path d="M500.5 433.0C506.0 432.2 510.4 433.3 515.0 435.0C519.6 436.7 523.5 439.4 528.0 443.0C532.5 446.6 537.2 451.4 542.0 456.5C546.8 461.6 552.9 468.0 556.9 473.4C560.9 478.8 563.8 483.4 566.0 489.0C568.2 494.6 570.5 500.7 570.3 507.0C570.0 513.3 568.7 520.9 564.5 527.0C560.3 533.1 553.2 539.2 545.2 543.7C537.2 548.2 525.2 551.8 516.8 553.7C508.4 555.6 503.0 556.7 495.0 555.0C487.0 553.3 475.8 548.4 468.6 543.7C461.4 539.0 456.1 533.7 451.9 527.0C447.7 520.3 444.1 511.0 443.5 503.5C442.9 496.0 445.1 489.6 448.5 481.8C451.9 474.0 458.0 463.8 463.6 456.7C469.2 449.6 475.9 443.4 482.0 439.5C488.1 435.6 495.0 433.8 500.5 433.0Z" fill="#fdfdfd"/><circle cx="503.7" cy="500" r="24" fill="none" stroke="#02ad4e" stroke-width="10"/></g><rect x="22.9" y="51" width="9" height="1" fill="#888" opacity="0.7"/><rect x="16.4" y="55.0" width="22" height="1.2" fill="#999" opacity="0.6"/><rect x="16.4" y="57.9" width="22" height="1.2" fill="#999" opacity="0.6"/><rect x="16.4" y="60.8" width="22" height="1.2" fill="#999" opacity="0.6"/><rect x="19.4" y="63.7" width="16" height="1.2" fill="#999" opacity="0.6"/><g transform="translate(62.9 31) scale(0.1) translate(-503.5 -500)"><path d="M402.7 460.5C402.8 455.9 403.9 450.2 407.4 445.8C410.8 441.4 415.2 438.2 423.4 433.8C431.6 429.4 444.6 423.1 456.8 419.1C469.1 415.1 483.5 412.0 496.9 409.7C510.3 407.4 524.8 405.7 537.0 405.5C549.2 405.3 561.5 406.3 570.4 408.4C579.3 410.4 585.4 414.0 590.5 417.8C595.6 421.6 598.9 425.8 601.1 431.1C603.3 436.4 603.6 444.2 603.8 449.8C603.9 455.4 603.7 457.4 602.0 465.0C600.3 472.6 597.3 485.4 593.7 495.2C590.1 505.0 585.6 514.4 580.3 523.6C575.0 532.8 568.6 541.8 561.9 550.4C555.2 559.0 546.9 568.8 540.2 575.5C533.5 582.2 527.2 587.2 521.8 590.5C516.4 593.8 512.3 595.2 508.0 595.0C503.7 594.8 500.9 592.8 496.0 589.0C491.1 585.2 485.4 579.1 478.6 572.1C471.8 565.1 462.4 555.6 455.2 547.0C448.0 538.4 441.3 528.9 435.2 520.3C429.1 511.7 423.1 503.0 418.4 495.2C413.6 487.4 409.3 479.2 406.7 473.4C404.1 467.6 402.6 465.1 402.7 460.5Z" fill="#02ad4e"/><path d="M500.5 433.0C506.0 432.2 510.4 433.3 515.0 435.0C519.6 436.7 523.5 439.4 528.0 443.0C532.5 446.6 537.2 451.4 542.0 456.5C546.8 461.6 552.9 468.0 556.9 473.4C560.9 478.8 563.8 483.4 566.0 489.0C568.2 494.6 570.5 500.7 570.3 507.0C570.0 513.3 568.7 520.9 564.5 527.0C560.3 533.1 553.2 539.2 545.2 543.7C537.2 548.2 525.2 551.8 516.8 553.7C508.4 555.6 503.0 556.7 495.0 555.0C487.0 553.3 475.8 548.4 468.6 543.7C461.4 539.0 456.1 533.7 451.9 527.0C447.7 520.3 444.1 511.0 443.5 503.5C442.9 496.0 445.1 489.6 448.5 481.8C451.9 474.0 458.0 463.8 463.6 456.7C469.2 449.6 475.9 443.4 482.0 439.5C488.1 435.6 495.0 433.8 500.5 433.0Z" fill="#fdfdfd"/><circle cx="503.7" cy="500" r="24" fill="none" stroke="#02ad4e" stroke-width="10"/></g><rect x="58.4" y="51" width="9" height="1" fill="#888" opacity="0.7"/><rect x="51.9" y="55.0" width="22" height="1.2" fill="#999" opacity="0.6"/><rect x="51.9" y="57.9" width="22" height="1.2" fill="#999" opacity="0.6"/><rect x="51.9" y="60.8" width="22" height="1.2" fill="#999" opacity="0.6"/><rect x="54.9" y="63.7" width="16" height="1.2" fill="#999" opacity="0.6"/><g transform="translate(98.1 31) scale(0.1) translate(-503.5 -500)"><path d="M402.7 460.5C402.8 455.9 403.9 450.2 407.4 445.8C410.8 441.4 415.2 438.2 423.4 433.8C431.6 429.4 444.6 423.1 456.8 419.1C469.1 415.1 483.5 412.0 496.9 409.7C510.3 407.4 524.8 405.7 537.0 405.5C549.2 405.3 561.5 406.3 570.4 408.4C579.3 410.4 585.4 414.0 590.5 417.8C595.6 421.6 598.9 425.8 601.1 431.1C603.3 436.4 603.6 444.2 603.8 449.8C603.9 455.4 603.7 457.4 602.0 465.0C600.3 472.6 597.3 485.4 593.7 495.2C590.1 505.0 585.6 514.4 580.3 523.6C575.0 532.8 568.6 541.8 561.9 550.4C555.2 559.0 546.9 568.8 540.2 575.5C533.5 582.2 527.2 587.2 521.8 590.5C516.4 593.8 512.3 595.2 508.0 595.0C503.7 594.8 500.9 592.8 496.0 589.0C491.1 585.2 485.4 579.1 478.6 572.1C471.8 565.1 462.4 555.6 455.2 547.0C448.0 538.4 441.3 528.9 435.2 520.3C429.1 511.7 423.1 503.0 418.4 495.2C413.6 487.4 409.3 479.2 406.7 473.4C404.1 467.6 402.6 465.1 402.7 460.5Z" fill="#02ad4e"/><path d="M500.5 433.0C506.0 432.2 510.4 433.3 515.0 435.0C519.6 436.7 523.5 439.4 528.0 443.0C532.5 446.6 537.2 451.4 542.0 456.5C546.8 461.6 552.9 468.0 556.9 473.4C560.9 478.8 563.8 483.4 566.0 489.0C568.2 494.6 570.5 500.7 570.3 507.0C570.0 513.3 568.7 520.9 564.5 527.0C560.3 533.1 553.2 539.2 545.2 543.7C537.2 548.2 525.2 551.8 516.8 553.7C508.4 555.6 503.0 556.7 495.0 555.0C487.0 553.3 475.8 548.4 468.6 543.7C461.4 539.0 456.1 533.7 451.9 527.0C447.7 520.3 444.1 511.0 443.5 503.5C442.9 496.0 445.1 489.6 448.5 481.8C451.9 474.0 458.0 463.8 463.6 456.7C469.2 449.6 475.9 443.4 482.0 439.5C488.1 435.6 495.0 433.8 500.5 433.0Z" fill="#fdfdfd"/><circle cx="503.7" cy="500" r="24" fill="none" stroke="#02ad4e" stroke-width="10"/></g><rect x="93.6" y="51" width="9" height="1" fill="#888" opacity="0.7"/><rect x="87.1" y="55.0" width="22" height="1.2" fill="#999" opacity="0.6"/><rect x="87.1" y="57.9" width="22" height="1.2" fill="#999" opacity="0.6"/><rect x="87.1" y="60.8" width="22" height="1.2" fill="#999" opacity="0.6"/><rect x="90.1" y="63.7" width="16" height="1.2" fill="#999" opacity="0.6"/></svg>
<div class="a" style="left:0px;top:464px;font-size:16.5px;line-height:20px;color:#444">26</div>
<svg class="a" style="left:24px;top:469px" width="126" height="72" viewBox="0 0 126 72"><rect x=".5" y=".5" width="125" height="71" fill="#fdfdfd" stroke="#c8c8c8"/><circle cx="9.9" cy="7.5" r="3.4" fill="#02ad4e"/><rect x="15.5" y="6.3" width="24" height="2.4" fill="#555" opacity=".55"/><rect x="103.5" y="6.5" width="3" height="2.6" fill="#02ad4e" opacity=".9"/><rect x="107" y="6.8" width="13" height="2" fill="#02ad4e" opacity=".6"/><path d="M1.9 33V69.4H123.6V33H119.8V64.8H5.7V33Z" fill="#02ad4e"/><path d="M23.7 20.1L30.799999999999997 27.2L23.7 34.3L16.6 27.2Z" fill="#02ad4e"/><circle cx="23.7" cy="27.2" r="1.5" fill="#fff" opacity=".8"/><rect x="18.7" y="40" width="10" height="1" fill="#999" opacity="0.6"/><path d="M41.5 20.1L48.6 27.2L41.5 34.3L34.4 27.2Z" fill="#02ad4e"/><circle cx="41.5" cy="27.2" r="1.5" fill="#fff" opacity=".8"/><rect x="36.5" y="40" width="10" height="1" fill="#999" opacity="0.6"/><path d="M62.5 17.2L72.5 27.2L62.5 37.2L52.5 27.2Z" fill="#02ad4e"/><circle cx="62.5" cy="27.2" r="1.5" fill="#fff" opacity=".8"/><rect x="57.5" y="40" width="10" height="1" fill="#999" opacity="0.6"/><path d="M83.4 20.1L90.5 27.2L83.4 34.3L76.30000000000001 27.2Z" fill="#02ad4e"/><circle cx="83.4" cy="27.2" r="1.5" fill="#fff" opacity=".8"/><rect x="78.4" y="40" width="10" height="1" fill="#999" opacity="0.6"/><path d="M102.3 20.1L109.39999999999999 27.2L102.3 34.3L95.2 27.2Z" fill="#02ad4e"/><circle cx="102.3" cy="27.2" r="1.5" fill="#fff" opacity=".8"/><rect x="97.3" y="40" width="10" height="1" fill="#999" opacity="0.6"/><rect x="14" y="46.6" width="97.5" height="1.4" fill="#999" opacity="0.55"/><rect x="14" y="49.6" width="97.5" height="1.4" fill="#999" opacity="0.55"/><rect x="14" y="52.6" width="97.5" height="1.4" fill="#999" opacity="0.55"/><rect x="14" y="55.6" width="97.5" height="1.4" fill="#999" opacity="0.55"/></svg>
<div class="a" style="left:0px;top:554px;font-size:16.5px;line-height:20px;color:#444">27</div>
<svg class="a" style="left:24px;top:559px" width="126" height="72" viewBox="0 0 126 72"><rect x=".5" y=".5" width="125" height="71" fill="#fdfdfd" stroke="#c8c8c8"/><circle cx="9.9" cy="7.5" r="3.4" fill="#02ad4e"/><rect x="15.5" y="6.3" width="24" height="2.4" fill="#555" opacity=".55"/><rect x="103.5" y="6.5" width="3" height="2.6" fill="#02ad4e" opacity=".9"/><rect x="107" y="6.8" width="13" height="2" fill="#02ad4e" opacity=".6"/><rect x="5.7" y="19.8" width="25.3" height="42.9" rx="1.2" fill="#02ad4e"/><circle cx="18.3" cy="26.8" r="3.9" fill="none" stroke="#fff" stroke-width="1.2"/><rect x="10.7" y="35.8" width="15" height="1.5" fill="#fff" opacity="0.85"/><rect x="8.7" y="39" width="19.5" height="0.6" fill="#fff" opacity="0.9"/><rect x="7.7" y="43.8" width="21.5" height="1.1" fill="#fff" opacity="0.6"/><rect x="7.7" y="46.4" width="21.5" height="1.1" fill="#fff" opacity="0.6"/><rect x="7.7" y="49.0" width="21.5" height="1.1" fill="#fff" opacity="0.6"/><rect x="7.7" y="51.599999999999994" width="21.5" height="1.1" fill="#fff" opacity="0.6"/><rect x="7.7" y="54.199999999999996" width="21.5" height="1.1" fill="#fff" opacity="0.6"/><rect x="35.4" y="19.8" width="25.3" height="42.9" rx="1.2" fill="#02ad4e"/><circle cx="48.0" cy="26.8" r="3.9" fill="none" stroke="#fff" stroke-width="1.2"/><rect x="40.4" y="35.8" width="15" height="1.5" fill="#fff" opacity="0.85"/><rect x="38.4" y="39" width="19.5" height="0.6" fill="#fff" opacity="0.9"/><rect x="37.4" y="43.8" width="21.5" height="1.1" fill="#fff" opacity="0.6"/><rect x="37.4" y="46.4" width="21.5" height="1.1" fill="#fff" opacity="0.6"/><rect x="37.4" y="49.0" width="21.5" height="1.1" fill="#fff" opacity="0.6"/><rect x="37.4" y="51.599999999999994" width="21.5" height="1.1" fill="#fff" opacity="0.6"/><rect x="37.4" y="54.199999999999996" width="21.5" height="1.1" fill="#fff" opacity="0.6"/><rect x="65" y="19.8" width="25.3" height="42.9" rx="1.2" fill="#02ad4e"/><circle cx="77.6" cy="26.8" r="3.9" fill="none" stroke="#fff" stroke-width="1.2"/><rect x="70" y="35.8" width="15" height="1.5" fill="#fff" opacity="0.85"/><rect x="68" y="39" width="19.5" height="0.6" fill="#fff" opacity="0.9"/><rect x="67" y="43.8" width="21.5" height="1.1" fill="#fff" opacity="0.6"/><rect x="67" y="46.4" width="21.5" height="1.1" fill="#fff" opacity="0.6"/><rect x="67" y="49.0" width="21.5" height="1.1" fill="#fff" opacity="0.6"/><rect x="67" y="51.599999999999994" width="21.5" height="1.1" fill="#fff" opacity="0.6"/><rect x="67" y="54.199999999999996" width="21.5" height="1.1" fill="#fff" opacity="0.6"/><rect x="94.7" y="19.8" width="25.3" height="42.9" rx="1.2" fill="#02ad4e"/><circle cx="107.3" cy="26.8" r="3.9" fill="none" stroke="#fff" stroke-width="1.2"/><rect x="99.7" y="35.8" width="15" height="1.5" fill="#fff" opacity="0.85"/><rect x="97.7" y="39" width="19.5" height="0.6" fill="#fff" opacity="0.9"/><rect x="96.7" y="43.8" width="21.5" height="1.1" fill="#fff" opacity="0.6"/><rect x="96.7" y="46.4" width="21.5" height="1.1" fill="#fff" opacity="0.6"/><rect x="96.7" y="49.0" width="21.5" height="1.1" fill="#fff" opacity="0.6"/><rect x="96.7" y="51.599999999999994" width="21.5" height="1.1" fill="#fff" opacity="0.6"/><rect x="96.7" y="54.199999999999996" width="21.5" height="1.1" fill="#fff" opacity="0.6"/><circle cx="33.3" cy="42.2" r="2.2" fill="#02ad4e" stroke="#fff" stroke-width=".6"/><circle cx="63.2" cy="42.2" r="2.2" fill="#02ad4e" stroke="#fff" stroke-width=".6"/><circle cx="92.8" cy="42.2" r="2.2" fill="#02ad4e" stroke="#fff" stroke-width=".6"/></svg>
<div class="a" style="left:0px;top:644px;font-size:16.5px;line-height:20px;color:#444">28</div>
<svg class="a" style="left:24px;top:649px" width="126" height="72" viewBox="0 0 126 72"><rect x=".5" y=".5" width="125" height="71" fill="#fdfdfd" stroke="#c8c8c8"/><g opacity=".12" fill="#888"><path d="M38 52c6-6 14-4 20-7s14-2 20 0 12 2 14 6-6 8-14 10-10 6-18 7-12-2-16-6-10-5-6-10z"/></g><text x="62.7" y="38.8" font-size="10.4" font-weight="bold" fill="#109a4e" text-anchor="middle" font-family="Liberation Sans">THANK YOU !</text><rect x="45" y="43.3" width="37" height="1.3" fill="#3c9a6a" opacity=".8"/><circle cx="91" cy="12" r="3.6" fill="none" stroke="#555" stroke-width="1.2"/><rect x="90.5" y="6.5" width="3" height="1.5" fill="#555"/></svg>
<div class="a" style="left:0px;top:734px;font-size:16.5px;line-height:20px;color:#444">29</div>
<svg class="a" style="left:24px;top:739px" width="126" height="72" viewBox="0 0 126 72"><rect x=".5" y=".5" width="125" height="71" fill="#fdfdfd" stroke="#c8c8c8"/><circle cx="9.9" cy="7.5" r="3.4" fill="#02ad4e"/><rect x="15.5" y="6.3" width="16" height="2.4" fill="#555" opacity=".55"/><rect x="103.5" y="6.5" width="3" height="2.6" fill="#02ad4e" opacity=".9"/><rect x="107" y="6.8" width="13" height="2" fill="#02ad4e" opacity=".6"/><g transform="translate(16.9 31) scale(0.092) translate(-503.5 -500)"><path d="M402.7 460.5C402.8 455.9 403.9 450.2 407.4 445.8C410.8 441.4 415.2 438.2 423.4 433.8C431.6 429.4 444.6 423.1 456.8 419.1C469.1 415.1 483.5 412.0 496.9 409.7C510.3 407.4 524.8 405.7 537.0 405.5C549.2 405.3 561.5 406.3 570.4 408.4C579.3 410.4 585.4 414.0 590.5 417.8C595.6 421.6 598.9 425.8 601.1 431.1C603.3 436.4 603.6 444.2 603.8 449.8C603.9 455.4 603.7 457.4 602.0 465.0C600.3 472.6 597.3 485.4 593.7 495.2C590.1 505.0 585.6 514.4 580.3 523.6C575.0 532.8 568.6 541.8 561.9 550.4C555.2 559.0 546.9 568.8 540.2 575.5C533.5 582.2 527.2 587.2 521.8 590.5C516.4 593.8 512.3 595.2 508.0 595.0C503.7 594.8 500.9 592.8 496.0 589.0C491.1 585.2 485.4 579.1 478.6 572.1C471.8 565.1 462.4 555.6 455.2 547.0C448.0 538.4 441.3 528.9 435.2 520.3C429.1 511.7 423.1 503.0 418.4 495.2C413.6 487.4 409.3 479.2 406.7 473.4C404.1 467.6 402.6 465.1 402.7 460.5Z" fill="#02ad4e"/><path d="M500.5 433.0C506.0 432.2 510.4 433.3 515.0 435.0C519.6 436.7 523.5 439.4 528.0 443.0C532.5 446.6 537.2 451.4 542.0 456.5C546.8 461.6 552.9 468.0 556.9 473.4C560.9 478.8 563.8 483.4 566.0 489.0C568.2 494.6 570.5 500.7 570.3 507.0C570.0 513.3 568.7 520.9 564.5 527.0C560.3 533.1 553.2 539.2 545.2 543.7C537.2 548.2 525.2 551.8 516.8 553.7C508.4 555.6 503.0 556.7 495.0 555.0C487.0 553.3 475.8 548.4 468.6 543.7C461.4 539.0 456.1 533.7 451.9 527.0C447.7 520.3 444.1 511.0 443.5 503.5C442.9 496.0 445.1 489.6 448.5 481.8C451.9 474.0 458.0 463.8 463.6 456.7C469.2 449.6 475.9 443.4 482.0 439.5C488.1 435.6 495.0 433.8 500.5 433.0Z" fill="#fdfdfd"/><circle cx="503.7" cy="500" r="24" fill="none" stroke="#02ad4e" stroke-width="10"/></g><g transform="translate(40.1 31) scale(0.092) translate(-503.5 -500)"><path d="M402.7 460.5C402.8 455.9 403.9 450.2 407.4 445.8C410.8 441.4 415.2 438.2 423.4 433.8C431.6 429.4 444.6 423.1 456.8 419.1C469.1 415.1 483.5 412.0 496.9 409.7C510.3 407.4 524.8 405.7 537.0 405.5C549.2 405.3 561.5 406.3 570.4 408.4C579.3 410.4 585.4 414.0 590.5 417.8C595.6 421.6 598.9 425.8 601.1 431.1C603.3 436.4 603.6 444.2 603.8 449.8C603.9 455.4 603.7 457.4 602.0 465.0C600.3 472.6 597.3 485.4 593.7 495.2C590.1 505.0 585.6 514.4 580.3 523.6C575.0 532.8 568.6 541.8 561.9 550.4C555.2 559.0 546.9 568.8 540.2 575.5C533.5 582.2 527.2 587.2 521.8 590.5C516.4 593.8 512.3 595.2 508.0 595.0C503.7 594.8 500.9 592.8 496.0 589.0C491.1 585.2 485.4 579.1 478.6 572.1C471.8 565.1 462.4 555.6 455.2 547.0C448.0 538.4 441.3 528.9 435.2 520.3C429.1 511.7 423.1 503.0 418.4 495.2C413.6 487.4 409.3 479.2 406.7 473.4C404.1 467.6 402.6 465.1 402.7 460.5Z" fill="#02ad4e"/><path d="M500.5 433.0C506.0 432.2 510.4 433.3 515.0 435.0C519.6 436.7 523.5 439.4 528.0 443.0C532.5 446.6 537.2 451.4 542.0 456.5C546.8 461.6 552.9 468.0 556.9 473.4C560.9 478.8 563.8 483.4 566.0 489.0C568.2 494.6 570.5 500.7 570.3 507.0C570.0 513.3 568.7 520.9 564.5 527.0C560.3 533.1 553.2 539.2 545.2 543.7C537.2 548.2 525.2 551.8 516.8 553.7C508.4 555.6 503.0 556.7 495.0 555.0C487.0 553.3 475.8 548.4 468.6 543.7C461.4 539.0 456.1 533.7 451.9 527.0C447.7 520.3 444.1 511.0 443.5 503.5C442.9 496.0 445.1 489.6 448.5 481.8C451.9 474.0 458.0 463.8 463.6 456.7C469.2 449.6 475.9 443.4 482.0 439.5C488.1 435.6 495.0 433.8 500.5 433.0Z" fill="#fdfdfd"/><circle cx="503.7" cy="500" r="24" fill="none" stroke="#02ad4e" stroke-width="10"/></g><g transform="translate(62.9 31) scale(0.092) translate(-503.5 -500)"><path d="M402.7 460.5C402.8 455.9 403.9 450.2 407.4 445.8C410.8 441.4 415.2 438.2 423.4 433.8C431.6 429.4 444.6 423.1 456.8 419.1C469.1 415.1 483.5 412.0 496.9 409.7C510.3 407.4 524.8 405.7 537.0 405.5C549.2 405.3 561.5 406.3 570.4 408.4C579.3 410.4 585.4 414.0 590.5 417.8C595.6 421.6 598.9 425.8 601.1 431.1C603.3 436.4 603.6 444.2 603.8 449.8C603.9 455.4 603.7 457.4 602.0 465.0C600.3 472.6 597.3 485.4 593.7 495.2C590.1 505.0 585.6 514.4 580.3 523.6C575.0 532.8 568.6 541.8 561.9 550.4C555.2 559.0 546.9 568.8 540.2 575.5C533.5 582.2 527.2 587.2 521.8 590.5C516.4 593.8 512.3 595.2 508.0 595.0C503.7 594.8 500.9 592.8 496.0 589.0C491.1 585.2 485.4 579.1 478.6 572.1C471.8 565.1 462.4 555.6 455.2 547.0C448.0 538.4 441.3 528.9 435.2 520.3C429.1 511.7 423.1 503.0 418.4 495.2C413.6 487.4 409.3 479.2 406.7 473.4C404.1 467.6 402.6 465.1 402.7 460.5Z" fill="#02ad4e"/><path d="M500.5 433.0C506.0 432.2 510.4 433.3 515.0 435.0C519.6 436.7 523.5 439.4 528.0 443.0C532.5 446.6 537.2 451.4 542.0 456.5C546.8 461.6 552.9 468.0 556.9 473.4C560.9 478.8 563.8 483.4 566.0 489.0C568.2 494.6 570.5 500.7 570.3 507.0C570.0 513.3 568.7 520.9 564.5 527.0C560.3 533.1 553.2 539.2 545.2 543.7C537.2 548.2 525.2 551.8 516.8 553.7C508.4 555.6 503.0 556.7 495.0 555.0C487.0 553.3 475.8 548.4 468.6 543.7C461.4 539.0 456.1 533.7 451.9 527.0C447.7 520.3 444.1 511.0 443.5 503.5C442.9 496.0 445.1 489.6 448.5 481.8C451.9 474.0 458.0 463.8 463.6 456.7C469.2 449.6 475.9 443.4 482.0 439.5C488.1 435.6 495.0 433.8 500.5 433.0Z" fill="#fdfdfd"/><circle cx="503.7" cy="500" r="24" fill="none" stroke="#02ad4e" stroke-width="10"/></g><g transform="translate(85.7 31) scale(0.092) translate(-503.5 -500)"><path d="M402.7 460.5C402.8 455.9 403.9 450.2 407.4 445.8C410.8 441.4 415.2 438.2 423.4 433.8C431.6 429.4 444.6 423.1 456.8 419.1C469.1 415.1 483.5 412.0 496.9 409.7C510.3 407.4 524.8 405.7 537.0 405.5C549.2 405.3 561.5 406.3 570.4 408.4C579.3 410.4 585.4 414.0 590.5 417.8C595.6 421.6 598.9 425.8 601.1 431.1C603.3 436.4 603.6 444.2 603.8 449.8C603.9 455.4 603.7 457.4 602.0 465.0C600.3 472.6 597.3 485.4 593.7 495.2C590.1 505.0 585.6 514.4 580.3 523.6C575.0 532.8 568.6 541.8 561.9 550.4C555.2 559.0 546.9 568.8 540.2 575.5C533.5 582.2 527.2 587.2 521.8 590.5C516.4 593.8 512.3 595.2 508.0 595.0C503.7 594.8 500.9 592.8 496.0 589.0C491.1 585.2 485.4 579.1 478.6 572.1C471.8 565.1 462.4 555.6 455.2 547.0C448.0 538.4 441.3 528.9 435.2 520.3C429.1 511.7 423.1 503.0 418.4 495.2C413.6 487.4 409.3 479.2 406.7 473.4C404.1 467.6 402.6 465.1 402.7 460.5Z" fill="#02ad4e"/><path d="M500.5 433.0C506.0 432.2 510.4 433.3 515.0 435.0C519.6 436.7 523.5 439.4 528.0 443.0C532.5 446.6 537.2 451.4 542.0 456.5C546.8 461.6 552.9 468.0 556.9 473.4C560.9 478.8 563.8 483.4 566.0 489.0C568.2 494.6 570.5 500.7 570.3 507.0C570.0 513.3 568.7 520.9 564.5 527.0C560.3 533.1 553.2 539.2 545.2 543.7C537.2 548.2 525.2 551.8 516.8 553.7C508.4 555.6 503.0 556.7 495.0 555.0C487.0 553.3 475.8 548.4 468.6 543.7C461.4 539.0 456.1 533.7 451.9 527.0C447.7 520.3 444.1 511.0 443.5 503.5C442.9 496.0 445.1 489.6 448.5 481.8C451.9 474.0 458.0 463.8 463.6 456.7C469.2 449.6 475.9 443.4 482.0 439.5C488.1 435.6 495.0 433.8 500.5 433.0Z" fill="#fdfdfd"/><circle cx="503.7" cy="500" r="24" fill="none" stroke="#02ad4e" stroke-width="10"/></g><g transform="translate(108.9 31) scale(0.092) translate(-503.5 -500)"><path d="M402.7 460.5C402.8 455.9 403.9 450.2 407.4 445.8C410.8 441.4 415.2 438.2 423.4 433.8C431.6 429.4 444.6 423.1 456.8 419.1C469.1 415.1 483.5 412.0 496.9 409.7C510.3 407.4 524.8 405.7 537.0 405.5C549.2 405.3 561.5 406.3 570.4 408.4C579.3 410.4 585.4 414.0 590.5 417.8C595.6 421.6 598.9 425.8 601.1 431.1C603.3 436.4 603.6 444.2 603.8 449.8C603.9 455.4 603.7 457.4 602.0 465.0C600.3 472.6 597.3 485.4 593.7 495.2C590.1 505.0 585.6 514.4 580.3 523.6C575.0 532.8 568.6 541.8 561.9 550.4C555.2 559.0 546.9 568.8 540.2 575.5C533.5 582.2 527.2 587.2 521.8 590.5C516.4 593.8 512.3 595.2 508.0 595.0C503.7 594.8 500.9 592.8 496.0 589.0C491.1 585.2 485.4 579.1 478.6 572.1C471.8 565.1 462.4 555.6 455.2 547.0C448.0 538.4 441.3 528.9 435.2 520.3C429.1 511.7 423.1 503.0 418.4 495.2C413.6 487.4 409.3 479.2 406.7 473.4C404.1 467.6 402.6 465.1 402.7 460.5Z" fill="#02ad4e"/><path d="M500.5 433.0C506.0 432.2 510.4 433.3 515.0 435.0C519.6 436.7 523.5 439.4 528.0 443.0C532.5 446.6 537.2 451.4 542.0 456.5C546.8 461.6 552.9 468.0 556.9 473.4C560.9 478.8 563.8 483.4 566.0 489.0C568.2 494.6 570.5 500.7 570.3 507.0C570.0 513.3 568.7 520.9 564.5 527.0C560.3 533.1 553.2 539.2 545.2 543.7C537.2 548.2 525.2 551.8 516.8 553.7C508.4 555.6 503.0 556.7 495.0 555.0C487.0 553.3 475.8 548.4 468.6 543.7C461.4 539.0 456.1 533.7 451.9 527.0C447.7 520.3 444.1 511.0 443.5 503.5C442.9 496.0 445.1 489.6 448.5 481.8C451.9 474.0 458.0 463.8 463.6 456.7C469.2 449.6 475.9 443.4 482.0 439.5C488.1 435.6 495.0 433.8 500.5 433.0Z" fill="#fdfdfd"/><circle cx="503.7" cy="500" r="24" fill="none" stroke="#02ad4e" stroke-width="10"/></g></svg>
</div></body></html>
